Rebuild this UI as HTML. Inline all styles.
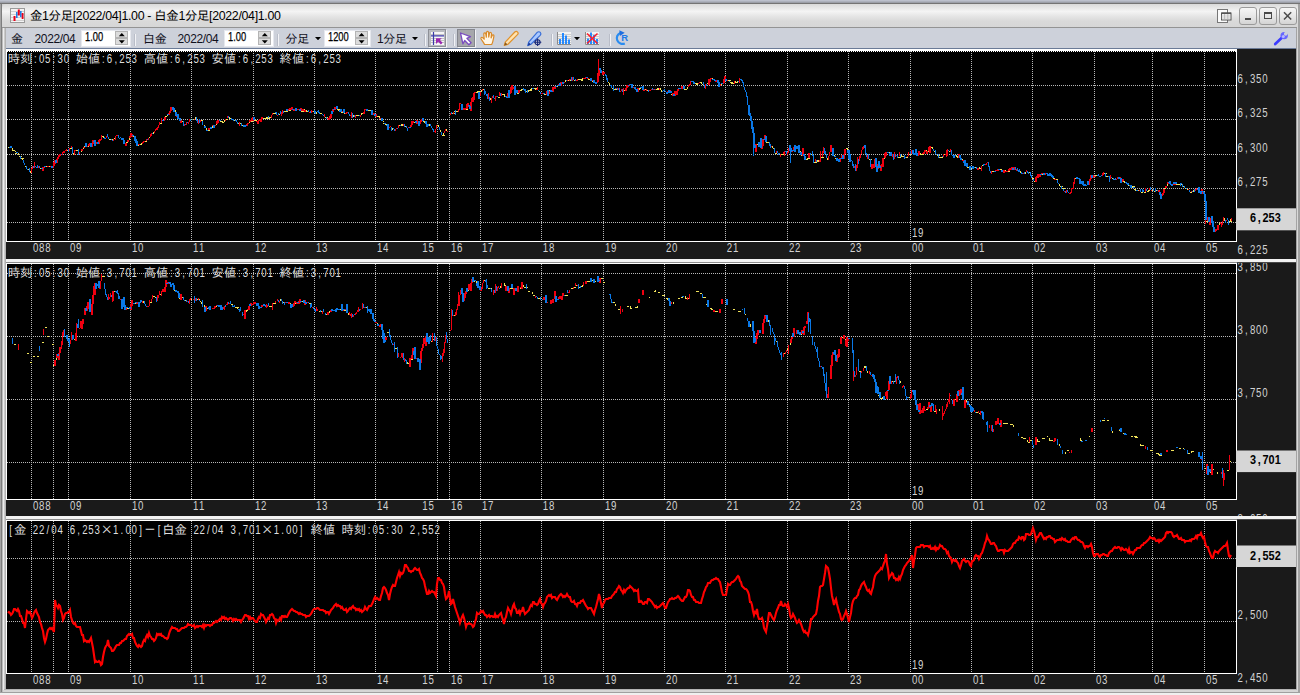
<!DOCTYPE html>
<html lang="ja"><head><meta charset="utf-8"><title>金1分足[2022/04]1.00 - 白金1分足[2022/04]1.00</title>
<style>
html,body{margin:0;padding:0}
body{width:1300px;height:695px;position:relative;overflow:hidden;background:#bcc0cc;font-family:"Liberation Sans","IPAGothic",sans-serif;font-size:12.4px;color:#000}
.abs{position:absolute}
#win{left:0;top:3px;width:1300px;height:690px;background:#d2d2d2}
#below{left:0;top:693px;width:1300px;height:2px;background:#f0f0f0}
#tbar{left:2px;top:1px;width:1296px;height:23px;background:linear-gradient(#d9d9d9 0,#f4f4f4 32%,#e4e4e4 55%,#d9d9d9 75%,#d6d6d6 100%);border-top-left-radius:4px;border-top-right-radius:4px}
#title{left:30px;top:9px;height:14px;line-height:14px;white-space:nowrap;letter-spacing:-0.33px;font-size:12.4px}
#tool{left:6px;top:28px;width:1290px;height:20px;background:#cdd1da}
.lbl{top:33px;height:13px;line-height:13px;white-space:nowrap;font-size:12px;letter-spacing:-0.35px;color:#10101c}
.spin{top:29.6px;height:17.6px;background:#fff;box-sizing:border-box;border:1px solid #e6e8ee}
.spin span{position:absolute;left:2.6px;top:0.2px;line-height:13px;font-size:12.6px;letter-spacing:0;transform:scaleX(.74);transform-origin:0 0;-webkit-text-stroke:0.25px #000}
.sb{position:absolute;right:1.6px;width:13px;height:7px;background:#dcdcdc;box-sizing:border-box;border:1px solid #b4b4b4}
.sep{top:34px;width:1px;height:12px;background:#f2f3f6;border-left:1px solid #b9bdc8}
.wb{top:7px;width:18px;height:18px;box-sizing:border-box;border:1px solid #9a9a9a;border-radius:3px;background:linear-gradient(#f6f6f6,#e9e9e9 45%,#d4d4d4)}
text.la{font-family:"Liberation Sans",sans-serif;font-size:12.4px}
text.lb{font-family:"Liberation Sans",sans-serif;font-size:12.4px;font-weight:bold}
text.cj{font-family:"Liberation Mono","IPAGothic",monospace;font-size:12.36px}
text.cs{font-family:"IPAGothic","Liberation Mono",monospace;font-size:12.36px}
</style></head><body>
<div id="win" class="abs"></div>
<div id="below" class="abs"></div>
<!-- frame edges -->
<div class="abs" style="left:0;top:1px;width:1300px;height:1px;background:#adb1bc"></div><div class="abs" style="left:0;top:2px;width:1300px;height:1px;background:#9c9fa8"></div><div class="abs" style="left:0;top:3px;width:1300px;height:1px;background:#747474"></div>
<div class="abs" style="left:0;top:4px;width:1px;height:689px;background:#a4a4a4"></div><div class="abs" style="left:1px;top:4px;width:1px;height:689px;background:#7e7e7e"></div>
<div class="abs" style="left:2px;top:27px;width:1px;height:666px;background:#bcbcbc"></div>
<div class="abs" style="left:3px;top:27px;width:1px;height:664px;background:#ececec"></div>
<div class="abs" style="left:4px;top:27px;width:1px;height:663px;background:#cacaca"></div><div class="abs" style="left:5px;top:27px;width:1px;height:663px;background:#b2b2b2"></div>
<div class="abs" style="left:1296px;top:27px;width:1px;height:663px;background:#a4a4a4"></div>
<div class="abs" style="left:1297px;top:5px;width:1px;height:687px;background:#d8d8d8"></div>
<div class="abs" style="left:1298px;top:4px;width:2px;height:689px;background:#a2a2a2"></div>
<div class="abs" style="left:4px;top:689px;width:1293px;height:1px;background:#b4b4b4"></div>
<div class="abs" style="left:3px;top:690px;width:1295px;height:2px;background:#d6d6d6"></div>
<div class="abs" style="left:0;top:692px;width:1300px;height:1px;background:#a0a0a0"></div>
<!-- title bar -->
<div id="tbar" class="abs" style="top:4px"></div>
<div class="abs" style="left:2px;top:27px;width:1295px;height:1px;background:#939393"></div>
<svg class="abs" style="left:10px;top:8px" width="15" height="16" viewBox="0 0 15 16">
<rect x="0.5" y="0.5" width="14" height="14" fill="#f4f4f4" stroke="#9a9a9a" stroke-width="1"/>
<path d="M1 3.5H14M1 6.5H14M1 9.5H14M1 12.5H14" stroke="#cfcfcf" stroke-width="1"/>
<path d="M4.5 8V13" stroke="#e8001a" stroke-width="2"/><path d="M6.8 4V10" stroke="#1e7fe8" stroke-width="1.6"/>
<path d="M8.8 1.5V7.5" stroke="#e8001a" stroke-width="2"/><path d="M10.8 3V9" stroke="#1e7fe8" stroke-width="1.6"/>
<path d="M12.6 5V11" stroke="#e8001a" stroke-width="1.8"/>
</svg>
<div id="title" class="abs">金1分足[2022/04]1.00 - 白金1分足[2022/04]1.00</div>
<!-- window list icon -->
<svg class="abs" style="left:1216px;top:8px" width="16" height="16" viewBox="0 0 16 16">
<rect x="1.5" y="1.5" width="10" height="13" fill="#fbfbfb" stroke="#777" stroke-width="1"/>
<rect x="5.5" y="5" width="9.5" height="7" fill="#fff" stroke="#555" stroke-width="1"/>
<rect x="5.5" y="4.5" width="9.5" height="1.6" fill="#555"/>
<path d="M8.6 6V12M11.8 6V12M5.5 8H15M5.5 10H15" stroke="#aaa" stroke-width="0.7"/>
</svg>
<div class="abs wb" style="left:1239px"><div class="abs" style="left:5px;top:10px;width:6px;height:2px;background:#4a4a4a"></div></div>
<div class="abs wb" style="left:1259px"><div class="abs" style="left:4px;top:4px;width:8px;height:7px;box-sizing:border-box;border:1px solid #4a4a4a;border-top-width:2px"></div></div>
<div class="abs wb" style="left:1279px"><svg class="abs" style="left:0;top:0" width="15" height="15"><path d="M4 4.2L11.2 11.6M11.2 4.2L4 11.6" stroke="#4a4a4a" stroke-width="1.5"/></svg></div>
<!-- toolbar -->
<div id="tool" class="abs"></div>
<div class="abs" style="left:6px;top:48px;width:1290px;height:1px;background:#6b7b97"></div>
<div class="abs lbl" style="left:11px">金</div>
<div class="abs lbl" style="left:34.5px">2022/04</div>
<div class="abs spin" style="left:81px;width:50px"><span>1.00</span><div class="sb" style="top:0.4px"></div><div class="sb" style="top:7.6px"></div></div>
<div class="abs sep" style="left:134px"></div>
<div class="abs lbl" style="left:143px">白金</div>
<div class="abs lbl" style="left:177.5px">2022/04</div>
<div class="abs spin" style="left:224px;width:50px"><span>1.00</span><div class="sb" style="top:0.4px"></div><div class="sb" style="top:7.6px"></div></div>
<div class="abs sep" style="left:277px"></div>
<div class="abs lbl" style="left:285.5px">分足</div>
<div class="abs lbl" style="left:377px">1分足</div>
<div class="abs spin" style="left:324px;width:47px"><span>1200</span><div class="sb" style="top:0.4px"></div><div class="sb" style="top:7.6px"></div></div>
<div class="abs sep" style="left:424px"></div>
<div class="abs sep" style="left:453px"></div>
<div class="abs sep" style="left:551px"></div>
<div class="abs sep" style="left:609px"></div>
<!-- toolbar icons -->
<svg class="abs" style="left:0;top:28px" width="1300" height="21" viewBox="0 28 1300 21">
<!-- spinner arrows & dropdown arrows -->
<g fill="#000">
<path d="M118.800 36.2l3-3.300 3 3.300zM118.800 40.200l3 3.300 3-3.300z"/>
<path d="M261.800 36.2l3-3.300 3 3.300zM261.800 40.200l3 3.300 3-3.300z"/>
<path d="M358.600 36.2l3-3.300 3 3.300zM358.600 40.200l3 3.300 3-3.300z"/>
<path d="M315 37h6l-3 3.2zM412 37h6l-3 3.2zM574 37h6l-3 3.2z"/>
</g>
<!-- icon1 pressed: chart cursor -->
<rect x="428.5" y="29.5" width="17" height="17" fill="#b9bbc0" stroke="#8d8f96"/>
<path d="M429 47.5H446.5V30" stroke="#f4f4f6" fill="none"/>
<rect x="431" y="32" width="13" height="13" fill="#f6f6f6"/>
<path d="M431 34.5H444M431 38.5H444M431 40.5H444M431 42.5H444" stroke="#c4c4c4" stroke-width="1"/>
<path d="M433.5 32V45M431 35.8H444" stroke="#3a3aa8" stroke-width="1.2"/>
<path d="M436 38.2h5.800l-1.900 1.900 2.700 2.700-1.700 1.700-2.700-2.700-2.200 2.100z" fill="#9a28b0"/>
<!-- icon2 pressed: arrow cursor -->
<rect x="457.5" y="29.5" width="17" height="17" fill="#a6a7ab" stroke="#85878e"/>
<path d="M458 47.5H475.5V30" stroke="#f4f4f6" fill="none"/>
<path d="M460.5 33l10 3.6-3.6 1.8 4.2 4.3-2.2 2.1-4.2-4.3-1.8 3.4z" fill="#fff" stroke="#7a4cc0" stroke-width="1.3" stroke-linejoin="round"/>
<!-- hand -->
<path d="M484.5 44.5c-.6-2-2.4-3.800-3.400-5.500-.7-1.300.8-2.200 1.800-1.200l1.300 1.400-.4-5.200c-.1-1.400 1.800-1.600 2-.2l.5 3.300.2-4.600c.1-1.400 2-1.400 2.100 0l.1 4.600.8-3.800c.3-1.300 2.100-1 2 .4l-.4 4.200 1-2.400c.5-1.200 2.100-.6 1.800.7-.5 2.500-.8 5.800-2.200 8.300z" fill="#fff6e6" stroke="#d98a28" stroke-width="1.2" stroke-linejoin="round"/>
<!-- pencil -->
<path d="M505.2 42.200l9.600-10.200c.8-.8 2.100-.8 2.800.1.700.8.600 1.900-.1 2.600l-9.800 9.800-3.400 1z" fill="#ffe3b0" stroke="#e0922c" stroke-width="1.2" stroke-linejoin="round"/>
<path d="M504.200 45.600l1.100-3.300 2.300 2.300z" fill="#8a5a20"/>
<!-- blue pen with crosshair -->
<path d="M528.700 42.200l8.500-9.800c.9-.9 2.300-.9 3.100 0 .8.900.7 2.100-.1 2.900l-9.300 9-3.200 1.300z" fill="#a9c8ff" stroke="#3a6fd8" stroke-width="1.2" stroke-linejoin="round"/>
<path d="M527.600 45.700l1.200-3.400 2.200 2.200z" fill="#1c3c9a"/>
<circle cx="537.600" cy="42.300" r="2.500" fill="none" stroke="#1a2a7a" stroke-width="1.1"/>
<path d="M537.600 38.600V46M533.900 42.300H541.300" stroke="#1a2a7a" stroke-width="1.1"/>
<!-- bar chart -->
<rect x="557" y="32" width="14" height="13" fill="#f3f3f3"/>
<path d="M557 34.500H571M557 36.500H571M557 38.500H571M557 40.500H571M557 42.500H571" stroke="#cdcdcd"/>
<path d="M557.500 32V44.500H571" stroke="#8a8a8a" fill="none"/>
<path d="M560 39V44M563 33V44M566 35.500V44M569 39.500V44" stroke="#1e86ff" stroke-width="1.9"/>
<!-- x chart -->
<rect x="585" y="32" width="14" height="13" fill="#f3f3f3"/>
<path d="M585 34.500H599M585 36.500H599M585 38.500H599M585 40.500H599M585 42.500H599" stroke="#cdcdcd"/>
<path d="M585.500 32V44.500H599" stroke="#8a8a8a" fill="none"/>
<path d="M588 38.500V44M591 32.500V44M594 35V44M597 39V44" stroke="#1e86ff" stroke-width="1.9"/>
<path d="M587 33.500L597.500 43.500M597.500 33.500L587 43.500" stroke="#ff1a2a" stroke-width="1.5"/>
<!-- refresh R -->
<path d="M624.800 43.400A5.600 5.600 0 1 1 620.300 32.900" fill="none" stroke="#2a8cf0" stroke-width="2.200"/>
<path d="M619.300 30.200l5.400 2.500-4.800 3.300z" fill="#1e6fe0"/>
<text x="621.200" y="41.400" font-family="Liberation Sans,sans-serif" font-weight="bold" font-size="9.500" fill="#1e7ae8">R</text>
<!-- wrench -->
<path d="M1275.200 44l6.600-6.200" stroke="#3c3cff" stroke-width="2.700" stroke-linecap="round"/>
<circle cx="1284.200" cy="35.600" r="3.700" fill="#6666ff"/>
<circle cx="1283.300" cy="36.500" r="1.500" fill="#b8b8ff"/>
<circle cx="1285.700" cy="33.900" r="1.800" fill="#cdd1da"/>
<path d="M1285.700 33.900l3-3.200" stroke="#cdd1da" stroke-width="2.600"/>
</svg>
<svg width="1300" height="695" viewBox="0 0 1300 695" style="position:absolute;left:0;top:0">
<defs>
<clipPath id="k1"><rect x="6" y="49" width="1290" height="210"/></clipPath>
<clipPath id="k2"><rect x="6" y="263" width="1290" height="253"/></clipPath>
<clipPath id="k3"><rect x="6" y="520" width="1290" height="169"/></clipPath>
</defs>
<rect x="6" y="49" width="1290" height="640" fill="#1a1a1a"/>
<g shape-rendering="crispEdges">
<rect x="7" y="51" width="1229" height="190" fill="#000"/>
<rect x="7" y="264" width="1229" height="235" fill="#000"/>
<rect x="7" y="521" width="1229" height="152" fill="#000"/>
<rect x="6" y="259" width="1290" height="3" fill="#f2f2f2"/><rect x="6" y="262" width="1231" height="1" fill="#8c8c8c"/><rect x="1237" y="262" width="59" height="1" fill="#484848"/>
<rect x="6" y="516" width="1290" height="3" fill="#f2f2f2"/><rect x="6" y="519" width="1231" height="1" fill="#8c8c8c"/><rect x="1237" y="519" width="59" height="1" fill="#484848"/>
</g>
<text class="cj" x="7.7 20.1" y="63.0" fill="#dedede">時刻</text><text class="la" transform="translate(0 63.0) scale(0.78 1)" x="43.7 49.9 57.8 67.4 73.6 81.6 91.2" y="0" fill="#dedede">:05:30 </text><text class="cj" x="75.7 88.0" y="63.0" fill="#dedede">始値</text><text class="la" transform="translate(0 63.0) scale(0.78 1)" x="130.8 137.0 146.7 152.9 160.8 168.7 178.4" y="0" fill="#dedede">:6,253 </text><text class="cj" x="143.7 156.0" y="63.0" fill="#dedede">高値</text><text class="la" transform="translate(0 63.0) scale(0.78 1)" x="218.0 224.2 233.8 240.0 248.0 255.9 265.5" y="0" fill="#dedede">:6,253 </text><text class="cj" x="211.6 224.0" y="63.0" fill="#dedede">安値</text><text class="la" transform="translate(0 63.0) scale(0.78 1)" x="305.1 311.3 321.0 327.2 335.1 343.0 352.7" y="0" fill="#dedede">:6,253 </text><text class="cj" x="279.6 292.0" y="63.0" fill="#dedede">終値</text><text class="la" transform="translate(0 63.0) scale(0.78 1)" x="392.3 398.5 408.1 414.3 422.3 430.2" y="0" fill="#dedede">:6,253</text>
<text class="cj" x="7.7 20.1" y="276.6" fill="#dedede">時刻</text><text class="la" transform="translate(0 276.6) scale(0.78 1)" x="43.7 49.9 57.8 67.4 73.6 81.6 91.2" y="0" fill="#dedede">:05:30 </text><text class="cj" x="75.7 88.0" y="276.6" fill="#dedede">始値</text><text class="la" transform="translate(0 276.6) scale(0.78 1)" x="130.8 137.0 146.7 152.9 160.8 168.7 178.4" y="0" fill="#dedede">:3,701 </text><text class="cj" x="143.7 156.0" y="276.6" fill="#dedede">高値</text><text class="la" transform="translate(0 276.6) scale(0.78 1)" x="218.0 224.2 233.8 240.0 248.0 255.9 265.5" y="0" fill="#dedede">:3,701 </text><text class="cj" x="211.6 224.0" y="276.6" fill="#dedede">安値</text><text class="la" transform="translate(0 276.6) scale(0.78 1)" x="305.1 311.3 321.0 327.2 335.1 343.0 352.7" y="0" fill="#dedede">:3,701 </text><text class="cj" x="279.6 292.0" y="276.6" fill="#dedede">終値</text><text class="la" transform="translate(0 276.6) scale(0.78 1)" x="392.3 398.5 408.1 414.3 422.3 430.2" y="0" fill="#dedede">:3,701</text>
<text class="la" transform="translate(0 533.6) scale(0.78 1)" x="12.0" y="0" fill="#dedede">[</text><text class="cj" x="13.9" y="533.6" fill="#dedede">金</text><text class="la" transform="translate(0 533.6) scale(0.78 1)" x="35.8 42.0 49.9 59.5 65.7 73.6 83.3 89.5 99.1 105.3 113.3 121.2" y="0" fill="#dedede"> 22/04 6,253</text><text class="cs" x="100.4" y="533.6" fill="#dedede">×</text><text class="la" transform="translate(0 533.6) scale(0.78 1)" x="145.0 154.6 160.8 168.7 178.4" y="0" fill="#dedede">1.00]</text><text class="cs" x="143.7" y="533.6" fill="#dedede">－</text><text class="la" transform="translate(0 533.6) scale(0.78 1)" x="202.1" y="0" fill="#dedede">[</text><text class="cj" x="162.2 174.6" y="533.6" fill="#dedede">白金</text><text class="la" transform="translate(0 533.6) scale(0.78 1)" x="241.8 248.0 255.9 265.5 271.7 279.6 289.3 295.5 305.1 311.3 319.3 327.2" y="0" fill="#dedede"> 22/04 3,701</text><text class="cs" x="261.1" y="533.6" fill="#dedede">×</text><text class="la" transform="translate(0 533.6) scale(0.78 1)" x="351.0 360.6 366.8 374.7 384.4 392.3" y="0" fill="#dedede">1.00] </text><text class="cj" x="310.5 322.9" y="533.6" fill="#dedede">終値</text><text class="cj" x="341.4 353.8" y="533.6" fill="#dedede">時刻</text><text class="la" transform="translate(0 533.6) scale(0.78 1)" x="471.5 477.7 485.6 495.3 501.5 509.4 519.1 525.3 534.9 541.1 549.0 557.0" y="0" fill="#dedede">:05:30 2,552</text>
<g shape-rendering="crispEdges">
<path d="M31.5 51V241M53.5 51V241M68.5 51V241M130.5 51V241M191.5 51V241M253.5 51V241M314.5 51V241M375.5 51V241M437.5 51V241M449.5 51V241M480.5 51V241M541.5 51V241M603.5 51V241M664.5 51V241M725.5 51V241M787.5 51V241M848.5 51V241M910.5 51V241M971.5 51V241M1032.5 51V241M1094.5 51V241M1152.5 51V241M1204.5 51V241M7 85.5H1236M7 119.5H1236M7 154.5H1236M7 188.5H1236M7 222.5H1236M31.5 264V499M53.5 264V499M68.5 264V499M130.5 264V499M191.5 264V499M253.5 264V499M314.5 264V499M375.5 264V499M437.5 264V499M449.5 264V499M480.5 264V499M541.5 264V499M603.5 264V499M664.5 264V499M725.5 264V499M787.5 264V499M848.5 264V499M910.5 264V499M971.5 264V499M1032.5 264V499M1094.5 264V499M1152.5 264V499M1204.5 264V499M7 273.5H1236M7 336.5H1236M7 399.5H1236M7 462.5H1236M31.5 521V673M53.5 521V673M68.5 521V673M130.5 521V673M191.5 521V673M253.5 521V673M314.5 521V673M375.5 521V673M437.5 521V673M449.5 521V673M480.5 521V673M541.5 521V673M603.5 521V673M664.5 521V673M725.5 521V673M787.5 521V673M848.5 521V673M910.5 521V673M971.5 521V673M1032.5 521V673M1094.5 521V673M1152.5 521V673M1204.5 521V673M7 558.5H1236M7 621.5H1236" stroke="#b8b8b8" stroke-width="1" stroke-dasharray="1 1" fill="none"/>
<path d="M7 51.5H1236" stroke="#fff" stroke-width="1" stroke-dasharray="1 1" fill="none"/>
<rect x="6" y="49" width="1231" height="2" fill="#fff"/><rect x="6" y="263" width="1231" height="1" fill="#fff"/><rect x="6" y="520" width="1231" height="1" fill="#fff"/><rect x="6" y="49" width="1" height="193" fill="#fff"/><rect x="1236" y="49" width="1" height="193" fill="#fff"/><rect x="6" y="241" width="1231" height="1" fill="#fff"/><rect x="6" y="263" width="1" height="237" fill="#fff"/><rect x="1236" y="263" width="1" height="237" fill="#fff"/><rect x="6" y="499" width="1231" height="1" fill="#fff"/><rect x="6" y="520" width="1" height="154" fill="#fff"/><rect x="1236" y="520" width="1" height="154" fill="#fff"/><rect x="6" y="673" width="1231" height="1" fill="#fff"/>
</g>
<rect x="1236" y="208.3" width="60" height="22.0" fill="#d6d6d6"/><rect x="1236" y="450.5" width="60" height="21.6" fill="#d6d6d6"/><rect x="1236" y="545.5" width="60" height="21.5" fill="#d6d6d6"/>
<g clip-path="url(#k1)"><g fill="none" stroke-width="1.1" shape-rendering="crispEdges"><path stroke="#f0e25a" stroke-width="1" d="M8.0 147.5h3M12.0 148.4V150.0M12.0 150.5h2M13.0 150.5h2M15.0 150.8V152.2M15.0 153.5h2M18.0 153.3V155.2M18.5 156.5h3M20.5 158.5h3M22.5 158.7V160.3M24.5 166.5h2M27.5 169.5h2M30.5 171.1V172.7M40.0 168.5h2M45.0 166.5h3M46.0 166.5h2M48.0 166.5h2M49.0 166.5h2M66.5 150.5h2M69.5 148.5h3M73.5 153.0V154.5M75.5 150.5h2M76.5 150.5h2M81.0 150.7V152.4M83.0 147.7V149.3M84.0 146.5h2M87.0 146.5h2M101.5 136.5h2M102.5 137.5h2M108.5 139.5h2M109.5 139.5h3M114.5 137.8V139.0M125.0 143.7V145.1M126.0 142.5h2M129.0 137.9V140.0M133.0 136.5h2M137.0 145.5h2M139.0 144.5h2M141.0 143.1V144.5M144.5 141.5h2M149.5 136.9V138.1M153.5 132.1V133.5M159.5 123.5h2M165.0 116.5h2M167.0 114.0V116.1M172.0 106.7V108.5M175.0 110.3V112.4M181.0 121.5h3M190.5 119.5h2M192.5 119.5h2M195.5 117.3V118.5M200.5 120.5h2M204.0 124.5V126.3M206.0 127.9V129.9M207.0 130.5h3M210.0 126.5V128.0M212.0 125.4V127.5M216.0 123.5V125.2M218.0 120.5h2M220.0 121.5h2M221.0 121.5h2M222.0 122.5h2M224.5 120.4V121.8M225.5 119.5h2M229.5 117.0V119.1M230.5 117.8V119.1M233.5 120.5h2M237.5 123.5h2M239.5 123.5h2M241.5 125.5h2M249.0 122.0V123.2M250.0 121.5h3M254.0 120.5h3M256.0 120.0V121.5M262.0 118.5h2M263.0 118.5h2M264.5 118.5h2M265.5 117.5h2M266.5 118.5h3M268.5 117.5h2M269.5 117.5h2M272.5 113.5h2M273.5 113.5h2M279.5 113.5V114.9M283.5 111.5h3M285.0 111.5h3M288.0 110.5h3M291.0 108.1V109.9M294.0 110.5h2M297.0 109.5h3M301.0 111.5h3M304.0 109.1V110.6M306.0 110.3V112.0M307.5 110.8V112.0M312.5 111.5h2M316.5 111.5V113.7M319.5 113.5h2M321.5 112.6V114.2M324.5 117.5h3M337.0 109.5h3M338.0 110.5h2M341.0 112.5h2M344.0 113.5h2M353.5 115.1V117.2M355.5 115.5h3M356.5 115.5h2M357.5 115.5h2M361.5 113.2V114.7M361.5 113.5h2M368.0 110.5h2M369.0 110.5h2M370.0 110.5h2M372.0 113.5h3M376.0 116.5h3M377.0 116.5h3M379.0 116.3V117.6M380.0 119.5h2M383.0 120.7V122.2M383.0 123.5h2M385.0 124.5h2M392.5 128.2V129.5M398.5 125.5h2M401.5 124.4V126.0M402.5 124.4V125.7M404.5 126.5h2M413.0 122.5h2M414.0 122.5h2M417.0 122.5h2M423.0 121.5h2M424.0 122.5h3M429.0 124.3V126.2M436.5 125.5h2M438.5 125.0V126.6M440.5 129.9V132.0M441.5 135.5h3M443.5 132.9V134.6M446.5 128.9V130.9M451.5 113.5h3M454.5 110.5V112.4M455.5 111.5h3M456.5 111.5h2M464.0 107.6V109.1M465.0 109.5h3M475.0 92.5h2M476.0 92.5h2M477.0 91.5h3M481.0 90.3V92.1M482.5 89.5h2M490.5 98.1V99.8M497.5 97.5h2M502.0 94.5h2M504.0 94.1V96.3M504.0 96.5h2M517.0 93.5h2M519.0 90.5h3M520.0 90.5h2M521.0 89.5h2M525.5 91.5h2M528.5 90.4V92.2M528.5 90.5h3M529.5 89.5h2M530.5 88.5h3M533.5 88.5h3M534.5 89.5h2M539.5 90.7V92.3M544.0 94.5h2M545.0 94.5h3M549.0 90.5h3M553.0 88.5h3M557.0 85.5V87.0M562.0 82.3V84.3M565.5 79.9V81.9M567.5 80.5h3M573.5 80.5h2M578.5 78.8V80.2M578.5 79.5h3M580.5 79.0V80.4M580.5 80.5h2M582.5 78.4V79.9M588.0 79.5h2M589.0 79.5h2M592.0 81.5h2M608.5 81.5V83.2M609.5 83.2V85.1M612.5 87.7V89.4M613.5 89.5h3M623.5 90.5h2M638.0 89.5h2M639.0 88.5h2M644.0 89.5h2M646.5 90.5h2M655.5 89.5h2M656.5 88.5h2M658.5 88.3V90.2M660.5 87.8V89.6M661.5 89.6V91.5M671.0 94.5h2M675.0 93.5h2M682.0 86.5h2M684.0 89.5h2M685.0 89.5h2M687.5 87.2V89.4M694.5 83.5h3M696.5 83.2V84.9M697.5 83.5V84.9M699.5 82.5h2M701.5 81.9V83.5M701.5 84.5h2M707.0 83.5h2M711.0 78.5h2M716.0 81.5h2M721.0 82.5V84.6M727.5 80.5h3M729.5 82.5h3M730.5 83.5h2M731.5 83.5h2M732.5 83.5h2M735.5 81.3V82.7M735.5 82.5h2M736.5 81.5h3M756.0 144.5h3M758.0 141.9V143.2M766.0 142.5h3M767.0 142.5h3M772.5 146.0V148.1M772.5 148.5h2M774.5 153.5h2M780.5 154.5h3M781.5 154.5h3M796.0 146.8V148.8M799.0 151.5h2M801.0 155.5h3M806.0 159.1V160.3M806.0 159.5h2M807.0 158.5h3M810.5 154.5h2M813.5 162.5h3M817.5 160.4V161.7M818.5 160.4V162.1M820.5 157.5h3M827.5 157.8V159.5M831.0 148.5h2M833.0 155.5h2M835.0 158.5h3M846.0 148.0V149.4M847.0 148.0V149.9M868.5 159.5h3M872.0 166.5h3M884.0 157.8V159.1M888.0 152.5h3M897.5 157.5h3M901.5 154.5V156.6M901.5 156.5h2M902.5 156.5h2M905.5 157.5h2M908.5 154.5h2M915.0 153.0V155.1M919.0 153.5h2M920.0 154.5h3M921.0 154.5h3M926.0 149.7V151.6M927.0 151.5h2M930.0 147.5h3M932.0 147.4V148.7M933.5 151.5h2M936.5 155.5h3M939.5 156.5V158.4M939.5 157.5h2M940.5 157.5h2M943.5 154.5h3M948.5 151.5h2M955.0 155.5h2M956.0 156.5h3M957.0 157.5h2M962.0 159.3V161.2M967.0 167.5h2M968.0 167.5h3M971.0 166.8V168.6M974.5 167.5h2M979.5 167.3V168.6M979.5 168.5h2M982.5 164.9V166.1M991.5 171.5h3M992.5 171.5h2M996.0 170.5h2M999.0 169.5h3M1000.0 169.5h2M1002.0 171.5h3M1004.0 170.5h2M1007.0 171.5h3M1011.0 169.1V170.4M1020.5 170.6V172.5M1025.5 171.8V173.8M1028.5 172.5h2M1031.5 178.5h2M1033.5 181.5h2M1042.0 174.5h2M1049.0 173.0V174.6M1053.0 178.5h2M1055.5 179.5h2M1059.5 183.9V186.0M1059.5 186.5h3M1061.5 188.5h3M1074.5 178.5h2M1078.0 178.0V179.4M1080.0 181.5h2M1087.0 183.0V184.5M1093.0 176.5h2M1095.0 175.5h3M1103.5 173.5h3M1105.5 176.5h2M1106.5 176.5h2M1111.5 178.5h2M1123.0 181.5h2M1124.0 182.5h3M1128.0 185.5h3M1132.0 185.7V187.6M1132.0 186.5h3M1134.0 189.5h2M1135.0 190.5h3M1137.5 190.5h3M1140.5 192.5h2M1143.5 192.5h2M1146.5 191.5h2M1147.5 190.5h2M1151.5 190.5h2M1153.5 191.5h2M1155.5 190.5h3M1164.0 188.5h2M1167.0 184.4V185.7M1176.0 184.5h2M1177.5 184.5h2M1178.5 184.5h3M1182.5 186.5h2M1184.5 188.5h2M1186.5 189.5h2M1189.5 192.5h2M1193.5 190.0V191.9M1199.0 191.5h2M1206.0 221.5h2M1211.0 215.5V217.7M1217.0 228.4V229.7M1219.5 223.2V225.3M1224.5 218.4V220.5M1228.5 221.5h3M1230.5 219.1V221.0"/><path stroke="#f00010" d="M31.5 168.0V172.7M32.5 166.3V169.3M34.5 161.5V168.1M38.5 166.0V168.2M43.0 167.4V170.5M44.0 166.8V168.0M48.0 166.1V167.3M51.0 166.1V167.3M53.0 166.3V167.5M54.0 161.6V166.3M55.0 159.6V163.8M57.0 158.9V162.9M58.0 156.9V158.9M59.0 154.5V156.9M60.0 153.8V156.3M62.5 151.6V154.7M63.5 151.1V152.5M64.5 151.3V152.5M65.5 150.0V151.3M66.5 148.9V150.8M69.5 147.9V151.3M71.5 146.1V147.6M74.5 149.9V154.5M75.5 150.0V151.4M79.5 151.8V153.9M82.0 149.3V150.7M84.0 146.7V147.9M87.0 145.5V147.3M89.0 144.2V146.0M90.0 142.9V144.4M92.0 142.6V146.7M93.0 140.1V143.5M96.0 142.6V143.8M97.0 142.2V143.4M99.0 139.6V144.1M100.0 139.1V141.1M101.5 135.4V139.7M106.5 136.0V138.1M113.5 138.5V141.1M115.5 135.9V140.3M116.5 135.0V136.4M117.5 135.0V136.3M126.0 142.5V145.7M128.0 140.0V142.0M130.0 136.2V137.9M131.0 132.5V137.1M132.0 133.8V136.8M139.0 144.1V145.3M142.5 141.9V144.1M143.5 140.9V142.6M144.5 140.9V142.3M146.5 139.1V140.5M148.5 138.1V140.0M150.5 133.5V136.9M151.5 132.8V136.0M154.5 131.0V133.0M155.5 129.4V131.0M156.5 127.5V129.6M157.5 127.3V129.6M158.5 125.3V127.8M159.5 121.9V125.3M161.5 118.1V123.1M164.0 119.5V120.7M165.0 116.6V119.5M169.0 113.0V114.9M170.0 111.1V113.0M171.0 106.6V111.1M177.0 115.9V117.1M181.0 120.3V123.4M184.5 123.6V126.0M186.5 122.1V125.1M188.5 121.9V124.1M189.5 118.8V122.4M194.5 118.5V119.7M198.5 119.6V123.6M200.5 120.0V122.4M209.0 127.6V129.7M213.0 124.7V125.9M215.0 124.5V126.3M217.0 121.3V124.1M218.0 119.7V122.5M225.5 119.4V120.6M227.5 116.4V118.2M239.5 122.2V125.9M247.0 124.2V126.0M248.0 122.5V124.4M250.0 120.2V122.0M252.0 117.8V121.1M253.0 116.9V120.6M257.0 120.6V122.1M258.0 120.6V123.7M259.0 119.9V121.3M260.0 119.3V120.5M261.0 119.2V121.5M262.0 117.0V119.2M271.5 114.6V118.2M272.5 112.7V114.6M277.5 114.7V116.1M281.5 112.1V115.7M282.5 109.6V113.9M288.0 108.9V110.7M290.0 107.7V110.3M292.0 107.2V109.9M294.0 109.3V110.5M297.0 108.8V110.0M299.0 109.0V110.2M301.0 108.3V111.1M303.0 108.8V110.6M305.0 110.3V111.5M309.5 111.6V112.8M311.5 109.6V112.5M312.5 110.9V112.1M324.5 113.9V116.9M328.0 117.7V119.4M329.0 117.9V119.8M330.0 116.0V119.3M331.0 113.7V117.9M333.0 109.0V112.3M335.0 107.3V109.7M336.0 106.6V108.3M343.0 110.9V112.1M346.0 112.6V113.8M347.0 111.9V113.1M350.5 115.2V116.4M351.5 112.1V118.1M355.5 115.1V117.7M360.5 114.7V116.7M363.5 112.2V113.7M364.5 109.3V113.5M365.5 108.5V110.0M374.0 113.3V114.5M376.0 114.4V116.7M380.0 117.6V118.8M389.5 126.5V127.7M390.5 126.0V127.2M395.5 128.8V130.9M396.5 128.0V129.2M398.5 124.8V128.4M403.5 123.8V125.7M408.5 127.0V128.2M411.0 125.2V126.6M412.0 120.6V125.2M413.0 121.2V123.4M417.0 119.8V123.5M420.0 121.0V123.9M421.0 120.4V121.6M422.0 118.9V120.4M434.5 130.5V131.7M435.5 128.9V133.1M436.5 125.3V128.9M444.5 131.3V133.4M445.5 128.9V131.3M447.5 130.9V132.1M450.5 113.0V114.6M453.5 112.4V113.6M458.5 108.8V111.9M459.5 102.9V109.8M460.5 103.2V104.4M463.0 107.6V109.6M465.0 107.7V110.1M467.0 103.5V109.2M468.0 102.5V106.5M471.0 102.0V110.8M472.0 97.8V102.0M473.0 96.9V101.6M474.0 93.0V100.4M475.0 91.8V93.0M480.0 92.1V95.9M482.5 89.0V91.3M488.5 92.9V98.8M491.5 97.9V102.7M492.5 95.5V98.1M495.5 95.8V100.9M496.5 95.5V97.0M499.5 92.3V96.2M501.5 93.0V95.7M508.0 92.9V98.3M510.0 91.2V93.5M511.0 86.6V93.4M512.0 85.3V90.0M513.0 86.5V89.1M514.0 87.1V89.1M516.0 90.7V93.4M519.0 89.7V92.7M536.5 89.1V90.3M537.5 87.2V90.2M541.5 93.1V94.3M542.5 93.0V94.2M547.0 91.0V95.2M549.0 90.5V93.8M553.0 86.9V92.1M555.0 85.6V89.3M559.0 83.9V85.1M561.0 82.4V86.2M564.5 81.5V82.8M567.5 79.9V81.1M569.5 78.6V80.9M570.5 78.6V80.1M572.5 76.9V80.6M576.5 80.2V81.4M577.5 79.4V80.6M583.5 78.2V79.4M585.0 77.7V79.0M586.0 77.1V78.3M588.0 78.2V79.4M592.0 80.0V81.2M597.0 81.6V82.8M598.0 72.6V81.6M599.0 68.2V75.7M602.0 71.3V72.5M603.0 72.0V74.6M604.0 71.9V74.2M616.5 87.5V89.1M618.5 88.4V89.9M620.5 90.7V91.9M621.5 89.2V90.7M623.5 87.9V94.6M626.0 88.1V90.7M627.0 85.3V88.2M628.0 85.5V87.0M630.0 83.6V85.4M633.0 86.6V88.2M634.0 86.8V88.0M638.0 87.5V91.9M642.0 86.8V88.0M644.0 88.6V91.2M646.5 89.3V90.5M649.5 90.0V91.2M650.5 89.5V91.2M651.5 88.9V90.1M653.5 89.0V90.2M655.5 88.8V90.4M659.5 87.8V90.2M668.0 91.0V92.4M670.0 90.1V92.6M673.0 93.0V95.7M675.0 91.0V96.3M677.0 91.3V95.3M678.0 89.4V91.4M681.0 87.6V88.8M682.0 86.3V89.4M688.5 85.3V87.2M689.5 84.3V85.5M690.5 80.9V84.6M698.5 82.7V83.9M699.5 82.2V83.4M705.5 84.2V88.6M709.0 79.0V84.6M710.0 78.5V81.7M711.0 77.8V79.0M716.0 80.3V81.5M720.0 83.9V85.6M723.0 83.0V84.2M724.0 78.5V83.3M725.0 75.9V79.7M727.0 79.6V80.9M734.5 81.3V83.9M739.5 77.6V82.7M756.0 143.6V151.7M760.0 141.7V146.5M762.0 145.7V149.1M763.0 139.2V145.9M765.0 135.2V140.0M771.5 145.6V147.0M776.5 151.4V152.6M780.5 153.9V156.5M783.5 151.9V153.8M784.5 151.4V156.0M787.5 151.8V155.3M788.5 147.5V153.1M792.0 149.8V151.5M794.0 147.4V150.0M798.0 147.9V149.1M803.0 148.4V155.5M809.0 153.2V157.8M815.5 158.7V161.7M819.5 159.7V162.1M820.5 151.4V161.5M822.5 151.3V157.0M823.5 147.4V153.1M828.5 156.4V159.5M829.5 152.3V156.4M831.0 145.1V152.3M838.0 159.0V160.2M840.0 157.9V161.6M842.0 155.3V158.2M844.0 154.3V158.6M845.0 149.4V154.3M854.5 166.3V167.8M856.5 165.2V171.4M857.5 157.4V168.3M859.5 156.3V161.1M860.5 153.9V157.9M861.5 150.2V153.9M862.5 146.7V150.2M863.5 145.7V148.7M867.5 155.4V159.1M872.0 163.6V168.9M874.0 164.1V167.9M875.0 159.0V165.2M878.0 164.0V168.7M881.0 164.5V170.5M882.0 163.7V166.3M883.0 158.1V167.4M885.0 152.9V157.8M886.0 152.2V155.5M887.0 151.5V152.7M892.5 154.1V157.2M894.5 151.9V159.4M896.5 155.1V156.3M899.5 152.2V156.4M907.5 156.1V157.3M908.5 152.1V156.1M911.5 150.1V154.4M918.0 152.5V155.5M919.0 151.4V155.4M923.0 152.8V154.0M924.0 152.4V153.6M925.0 149.7V152.4M927.0 150.7V153.9M929.0 147.1V151.0M930.0 145.8V153.0M943.5 153.6V157.1M945.5 153.8V155.0M946.5 149.9V157.3M947.5 148.9V156.0M950.5 149.2V151.5M959.0 154.3V157.9M963.0 159.9V161.2M977.5 168.1V170.2M978.5 168.0V170.3M981.5 165.9V170.7M985.5 163.7V165.1M986.5 162.6V164.7M987.5 161.9V163.1M991.5 171.1V173.6M996.0 170.0V171.2M998.0 168.6V171.2M1004.0 169.8V172.5M1006.0 170.9V172.3M1007.0 170.6V171.8M1009.0 168.6V170.7M1010.0 168.3V169.6M1012.0 167.3V170.4M1014.0 167.2V170.0M1016.5 168.9V170.5M1023.5 172.6V174.2M1026.5 169.6V171.8M1036.0 176.9V181.5M1037.0 175.9V177.9M1038.0 174.0V177.5M1039.0 174.3V176.1M1040.0 173.6V176.7M1042.0 173.0V174.3M1045.0 173.4V174.9M1046.0 172.8V174.0M1055.0 178.6V179.8M1064.5 190.5V191.7M1066.5 190.4V192.7M1069.5 193.1V194.3M1070.5 192.4V194.2M1071.5 188.2V192.7M1072.5 187.6V189.4M1073.5 181.5V188.6M1074.5 178.0V184.1M1089.0 181.1V185.2M1090.0 178.7V181.1M1091.0 175.4V178.7M1093.0 174.9V177.7M1095.0 175.7V176.9M1102.5 172.6V175.5M1103.5 172.4V174.6M1110.5 175.1V179.2M1116.5 178.6V179.9M1118.0 176.8V178.6M1120.0 177.3V178.5M1122.0 180.2V182.1M1123.0 178.9V181.0M1139.5 189.8V191.0M1145.5 188.4V192.3M1149.5 188.4V190.3M1151.5 189.9V191.1M1159.0 190.3V192.0M1162.0 193.8V196.3M1163.0 192.7V195.4M1164.0 188.7V192.7M1166.0 185.7V188.1M1168.0 181.8V184.4M1173.0 183.7V185.4M1175.0 182.2V184.7M1188.5 188.7V189.9M1191.5 191.0V192.2M1195.5 188.8V191.2M1196.5 188.1V190.2M1202.0 189.2V193.7M1208.0 216.5V221.2M1210.0 217.7V225.4M1215.0 229.8V232.2M1216.0 229.3V230.5M1218.0 225.3V229.8M1220.5 222.3V224.0M1221.5 223.3V226.9M1222.5 221.1V225.0M1223.5 216.7V221.1M1226.5 219.9V221.1M1231.5 218.0V221.1M598.5 59V80M1205.5 212V224"/><path stroke="#0a78e6" d="M10.0 146.5V147.7M11.0 146.1V148.4M17.0 151.7V153.3M20.5 156.1V159.4M23.5 160.1V162.9M24.5 162.9V165.3M26.5 166.0V169.0M27.5 168.8V170.0M29.5 168.2V172.0M33.5 166.3V168.1M35.5 165.7V166.9M36.5 166.9V168.1M37.5 165.2V167.6M39.5 166.0V168.1M42.0 167.5V169.1M45.0 165.7V167.1M52.0 165.8V167.5M56.0 160.3V162.8M61.5 153.8V155.0M68.5 148.8V151.5M72.5 146.9V153.5M78.5 148.7V154.6M86.0 143.3V147.4M91.0 142.9V146.6M94.0 140.5V141.7M95.0 140.3V146.4M98.0 142.2V144.1M104.5 136.6V139.3M105.5 137.7V138.9M107.5 134.4V137.4M108.5 137.3V138.7M111.5 138.6V139.8M112.5 139.7V140.9M118.5 134.8V137.7M119.5 137.5V138.7M120.5 136.8V138.4M122.0 138.4V139.6M123.0 138.0V140.4M124.0 140.1V143.7M133.0 134.5V135.8M135.0 136.4V140.7M136.0 138.7V143.2M137.0 141.3V145.8M147.5 139.1V140.3M152.5 132.8V134.0M163.0 120.1V121.3M168.0 114.0V115.2M173.0 106.7V109.6M174.0 108.4V111.7M176.0 112.4V116.3M178.0 113.8V118.6M179.0 118.0V119.2M180.0 117.6V121.1M183.5 121.4V126.0M185.5 123.6V124.8M187.5 122.1V123.3M190.5 119.4V120.6M192.5 118.7V119.9M196.5 116.8V120.5M197.5 120.1V122.6M199.5 119.4V122.9M202.5 121.0V124.5M205.0 126.3V127.9M207.0 129.7V130.9M211.0 126.5V128.5M214.0 124.7V127.5M220.0 120.2V121.4M228.5 116.4V117.6M231.5 117.8V119.5M232.5 118.8V120.4M233.5 118.9V120.8M235.5 119.7V120.9M236.5 120.0V122.3M237.5 122.3V123.5M241.5 122.8V126.4M243.5 124.9V126.5M245.0 125.3V127.1M246.0 124.7V125.9M254.0 117.0V120.2M268.5 116.1V117.7M275.5 111.9V113.4M276.5 112.3V114.7M278.5 112.5V115.0M280.5 110.7V113.9M283.5 110.9V113.3M287.0 109.3V110.7M293.0 108.8V110.0M296.0 107.7V110.5M300.0 108.9V111.1M308.5 110.2V111.8M310.5 110.9V112.5M314.5 110.2V113.2M315.5 110.9V114.1M317.5 110.7V111.9M318.5 109.5V113.1M319.5 112.4V114.3M322.5 114.2V115.4M323.5 115.1V116.3M326.5 116.6V119.4M332.0 110.6V114.1M334.0 108.8V110.0M337.0 106.2V109.1M340.0 110.4V112.3M341.0 109.2V112.2M344.0 108.8V113.0M348.5 112.3V114.0M349.5 113.5V115.5M352.5 112.6V117.5M354.5 115.1V116.5M359.5 114.9V116.3M366.5 108.8V111.3M367.5 108.7V111.3M372.0 110.4V114.5M375.0 113.7V116.3M382.0 117.5V120.7M385.0 123.1V124.3M387.0 124.7V125.9M388.0 124.4V130.2M391.5 126.5V131.1M393.5 128.2V129.4M394.5 129.1V130.9M397.5 128.0V129.2M400.5 124.9V126.1M404.5 123.7V126.7M406.5 126.1V127.5M407.5 127.5V131.0M410.0 126.6V127.8M416.0 121.1V122.5M419.0 121.3V125.6M423.0 117.5V120.6M426.0 121.4V124.3M427.0 123.7V126.5M428.0 124.2V126.2M430.5 123.9V125.8M431.5 125.8V128.1M432.5 127.6V130.3M433.5 129.0V131.9M439.5 126.6V129.9M441.5 131.9V134.7M451.5 112.4V113.6M455.5 109.6V114.5M462.0 104.0V109.6M469.0 104.8V106.2M470.0 105.7V108.9M479.0 91.9V99.4M484.5 89.1V94.5M485.5 90.8V94.3M486.5 94.3V95.5M487.5 93.5V98.8M489.5 97.0V101.0M493.5 95.2V98.2M494.5 98.2V99.4M497.5 95.5V97.0M500.5 93.1V95.7M506.0 95.9V97.1M507.0 96.8V98.0M509.0 90.2V97.7M515.0 86.2V95.1M517.0 90.0V92.6M523.5 87.5V89.7M524.5 89.3V90.5M525.5 89.3V93.2M527.5 89.6V93.0M532.5 88.1V89.3M533.5 88.2V89.4M538.5 89.5V90.7M540.5 92.3V93.5M544.0 92.5V93.8M548.0 90.0V95.5M551.0 90.2V91.8M552.0 90.9V92.1M556.0 85.6V87.0M558.0 85.1V86.3M560.0 83.2V85.8M563.0 82.3V83.5M566.5 79.9V81.1M571.5 76.7V80.6M573.5 77.1V80.2M575.5 79.1V81.1M587.0 77.1V78.3M591.0 78.4V80.9M594.0 80.2V82.6M595.0 81.7V82.9M596.0 82.3V83.5M600.0 68.0V69.7M601.0 69.7V72.7M605.5 73.9V76.3M606.5 74.8V79.5M607.5 78.0V81.5M610.5 85.1V86.3M611.5 85.3V87.7M613.5 86.2V91.2M615.5 88.2V89.4M617.5 87.5V90.0M619.5 88.3V91.5M622.5 88.9V91.7M629.0 85.1V86.3M631.0 83.6V85.1M632.0 84.1V87.6M635.0 86.8V89.1M636.0 89.0V90.2M637.0 88.5V91.9M641.0 86.6V87.8M643.0 85.7V89.5M648.5 90.4V91.6M652.5 87.6V89.9M654.5 89.0V90.4M662.5 90.7V92.0M663.5 90.1V91.3M664.5 89.2V91.1M665.5 91.1V92.3M667.0 91.5V94.4M669.0 89.8V93.4M671.0 90.5V93.3M674.0 93.8V96.3M679.0 88.2V89.4M680.0 88.2V89.4M684.0 86.1V89.0M691.5 80.8V82.0M692.5 81.1V82.4M693.5 80.9V83.6M694.5 82.1V83.6M703.5 82.1V85.4M704.5 85.4V87.9M706.5 83.8V86.3M713.0 78.5V80.1M714.0 79.0V80.2M715.0 79.7V80.9M718.0 80.4V82.8M719.0 81.8V87.0M722.0 82.5V83.7M726.0 78.8V80.7M729.5 80.8V82.1M738.5 80.9V82.1M740.5 79.1V80.3M741.5 79.1V80.7M742.5 80.1V83.0M743.5 82.4V87.4M744.5 87.4V89.8M745.5 89.8V92.0M746.5 92.0V96.9M747.5 95.5V105.1M749.0 105.1V115.1M750.0 112.9V116.2M751.0 116.2V121.3M752.0 120.8V128.6M753.0 127.0V132.9M754.0 132.9V144.7M755.0 144.7V147.7M759.0 141.9V146.5M761.0 137.8V147.9M764.0 139.1V140.3M766.0 136.1V141.8M769.5 141.8V145.7M770.5 143.8V147.9M774.5 148.4V153.4M777.5 151.4V152.9M778.5 152.9V155.1M779.5 152.9V154.2M785.5 150.6V151.8M786.5 150.6V154.2M790.0 145.0V151.0M791.0 148.2V151.5M793.0 149.8V151.0M795.0 145.2V151.7M797.0 145.5V148.5M799.0 145.2V152.7M801.0 151.9V154.8M804.0 153.7V156.4M805.0 156.0V160.3M810.5 153.2V154.5M812.5 150.8V156.2M813.5 154.7V163.2M816.5 160.3V161.7M824.5 148.1V153.9M825.5 151.2V153.5M826.5 153.5V157.9M833.0 147.9V156.2M835.0 155.8V157.2M837.0 158.2V161.3M839.0 159.4V161.6M841.0 157.9V159.1M843.0 155.4V158.6M848.0 149.9V152.5M849.0 149.9V159.3M850.0 153.8V161.5M851.5 159.8V161.0M852.5 160.9V166.2M853.5 164.3V167.6M855.5 163.6V171.4M858.5 158.8V163.5M864.5 145.0V148.3M865.5 144.9V153.9M866.5 153.1V157.1M868.5 153.6V158.9M870.5 159.0V166.8M876.0 157.8V167.2M877.0 165.7V171.6M879.0 161.0V167.5M880.0 166.1V167.5M888.0 151.5V152.7M890.0 152.5V156.3M891.0 152.4V156.3M893.5 154.1V160.3M895.5 153.8V157.2M897.5 155.1V157.5M900.5 154.0V157.1M904.5 155.3V158.8M905.5 157.1V158.3M910.5 151.2V153.6M913.0 149.6V153.7M914.0 152.6V155.1M916.0 149.4V154.8M917.0 152.5V155.5M933.5 148.7V151.0M935.5 150.2V153.8M936.5 153.8V155.0M938.5 154.0V158.4M942.5 156.2V157.4M948.5 149.6V150.8M951.5 149.8V155.3M952.5 155.0V156.2M954.0 155.0V158.0M955.0 155.1V156.3M960.0 155.1V158.3M961.0 158.3V160.1M964.0 160.7V163.0M965.0 160.3V165.9M966.0 164.3V166.0M967.0 163.4V167.3M970.0 166.3V169.9M972.0 166.6V167.8M973.0 166.4V168.6M974.5 166.7V167.9M976.5 166.9V169.0M983.5 164.3V165.5M984.5 164.1V165.3M988.5 161.9V167.1M989.5 166.3V170.9M990.5 170.9V173.0M995.0 171.1V172.3M999.0 168.6V169.8M1002.0 169.7V172.4M1013.0 167.7V169.9M1015.5 166.7V169.8M1017.5 168.2V171.2M1018.5 170.2V172.0M1019.5 168.8V171.7M1021.5 172.4V174.0M1022.5 172.9V174.1M1024.5 172.3V173.8M1027.5 171.3V173.0M1028.5 172.4V173.6M1030.5 171.9V176.2M1031.5 175.1V177.6M1033.5 178.8V180.6M1041.0 173.7V174.9M1044.0 172.5V175.0M1047.0 172.8V174.4M1048.0 174.4V176.3M1050.0 173.0V175.9M1051.0 174.1V175.3M1052.0 175.3V176.5M1053.0 176.0V178.2M1057.5 179.8V182.6M1058.5 182.6V183.9M1061.5 186.0V189.2M1063.5 188.6V191.2M1065.5 190.5V192.6M1067.5 189.7V191.9M1068.5 191.9V193.1M1077.0 176.6V179.4M1079.0 178.0V179.4M1080.0 179.2V184.2M1082.0 180.5V183.7M1083.0 180.9V185.1M1084.0 184.8V186.0M1085.0 184.0V185.2M1086.0 184.5V185.7M1088.0 181.0V184.8M1092.0 175.4V177.7M1097.5 174.7V175.9M1098.5 173.8V176.3M1099.5 175.7V176.9M1100.5 175.7V176.9M1101.5 174.9V176.1M1105.5 172.9V176.5M1108.5 176.0V177.2M1109.5 176.4V182.0M1111.5 176.7V177.9M1113.5 178.3V179.7M1114.5 179.0V180.2M1115.5 178.3V179.9M1119.0 177.3V178.5M1121.0 178.4V182.9M1126.0 181.8V183.4M1127.0 183.0V184.2M1128.0 183.2V185.2M1130.0 184.9V186.1M1131.0 185.2V187.6M1134.0 186.6V188.4M1137.0 189.7V190.9M1140.5 189.2V191.5M1142.5 188.8V191.7M1143.5 190.1V191.8M1146.5 189.4V190.6M1150.5 187.1V189.9M1153.5 189.2V191.4M1155.5 187.5V192.3M1157.5 189.9V191.4M1160.0 191.7V195.3M1161.0 193.7V198.9M1169.0 181.6V183.3M1170.0 180.5V183.8M1171.0 183.8V185.0M1172.0 184.4V185.6M1174.0 181.9V183.9M1176.0 181.5V184.1M1180.5 183.1V185.8M1181.5 183.2V184.4M1182.5 183.6V187.3M1184.5 186.3V187.5M1186.5 188.0V189.2M1189.5 189.8V192.1M1192.5 190.8V192.0M1194.5 188.9V191.5M1197.5 189.0V190.2M1199.0 187.3V192.9M1201.0 191.2V193.7M1203.0 190.5V191.8M1204.0 191.7V193.9M1205.0 193.6V201.4M1206.0 200.7V220.3M1209.0 216.5V221.6M1212.0 215.5V222.6M1213.0 220.8V227.3M1214.0 227.3V232.2M1225.5 219.9V223.3M1227.5 218.0V220.4M1228.5 219.8V225.1M753.5 140V156M790.5 150V163"/></g></g>
<g clip-path="url(#k2)"><g fill="none" stroke-width="1.1" shape-rendering="crispEdges"><path stroke="#f0e25a" stroke-width="1" d="M53.0 365.5h2M56.0 358.0V359.6M74.5 338.5V340.2M89.0 302.3V304.1M101.5 276.5h3M113.5 291.5h2M127.0 308.5h2M129.0 306.8V308.1M132.0 303.5h3M134.0 303.5h2M143.5 301.3V302.8M149.5 302.5h2M153.5 295.5V297.1M154.5 295.5V296.9M154.5 297.5h2M159.5 294.5h2M163.0 289.5h2M174.0 290.5h2M179.0 298.5h2M181.0 297.5h2M185.5 299.8V301.1M191.5 298.7V300.1M196.5 299.5h3M200.5 301.0V302.3M201.5 302.3V303.5M204.0 305.4V306.7M206.0 308.5h3M207.0 308.5h3M215.0 306.5h2M230.5 304.5h2M234.5 307.5h3M235.5 307.5h3M237.5 307.1V308.6M245.0 311.5h2M246.0 310.5h2M263.0 304.4V305.9M268.5 306.5h2M269.5 306.5h3M271.5 305.5V306.8M272.5 303.5h3M273.5 303.5h2M280.5 299.3V301.4M282.5 302.5h3M288.0 302.7V303.9M289.0 303.5h2M295.0 303.5h2M301.0 301.5h2M303.0 300.4V301.8M308.5 303.5h3M318.5 311.5h2M321.5 310.7V312.0M325.5 314.5h3M329.0 310.9V312.7M329.0 311.5h2M335.0 308.8V310.2M337.0 309.5h2M339.0 309.5h2M340.0 309.5h2M344.0 310.5h2M348.5 312.8V314.9M365.5 307.5h2M372.0 313.5V315.6M377.0 322.5V324.5M378.0 325.5h2M387.0 332.5h3M394.5 348.5h3M407.5 362.4V363.9M407.5 363.5h2M410.0 359.5h3M418.0 359.5h3M430.5 341.5h2M433.5 338.5V340.0M454.5 314.7V316.2M467.0 290.5h2M473.0 281.5h2M476.0 281.3V283.1M479.0 285.8V287.7M483.5 280.5h2M487.5 288.5h2M488.5 288.5h3M500.5 286.1V288.1M504.0 282.8V284.9M504.0 285.5h2M509.0 288.5h3M512.0 288.5h2M520.0 287.0V288.6M523.5 284.9V286.8M523.5 287.5h3M524.5 287.5h3M527.5 291.5h2M532.5 292.1V294.3M532.5 295.5h2M537.5 298.5h2M538.5 298.5h3M544.0 299.5h3M554.0 298.0V299.3M556.0 299.5h3M564.5 295.5h3M570.5 288.5h2M573.5 287.5h2M575.5 285.5h2M578.5 287.5h2M580.5 286.5h2M581.5 285.5h2M585.0 282.1V283.3M587.0 281.5h2M588.0 281.5h2M591.0 280.5h3M592.0 280.5h2M595.0 280.8V282.3M600.0 278.5h3M603.0 282.5h2M612.5 302.5h2M615.5 304.1V305.8M617.5 309.5h2M627.0 306.5h2M630.0 306.2V307.9M630.0 308.5h2M635.0 307.5h3M637.0 305.6V307.2M642.0 291.3V292.9M649.5 296.9V298.2M653.5 291.5h2M655.5 290.1V291.7M657.5 292.5h2M661.5 295.5h3M666.0 298.5h2M667.0 299.5h2M673.0 302.1V304.0M678.0 298.5h2M681.0 297.5h2M685.0 296.1V298.1M685.0 298.5h2M687.5 298.5h2M695.5 291.5h3M699.5 293.5h2M702.5 297.5h3M705.5 304.5h2M710.0 308.5h2M711.0 309.5h2M715.0 311.5h2M717.0 310.8V312.2M732.5 309.5h2M737.5 311.5h3M738.5 311.5h2M745.5 313.6V315.2M750.0 324.4V326.6M752.0 322.4V324.3M762.0 329.7V331.0M768.0 320.3V322.4M775.5 341.5h2M783.5 353.5h2M787.5 347.6V349.6M790.0 343.4V344.6M798.0 332.5h2M800.0 334.5h2M841.0 337.5h2M845.0 339.1V341.2M858.5 371.5h2M864.5 366.3V368.0M865.5 366.3V368.3M867.5 371.0V372.9M878.0 395.5h2M880.0 398.5h2M882.0 397.3V398.8M883.0 395.9V397.3M891.5 381.5h3M900.5 381.1V382.8M908.5 397.5h2M926.0 409.5h2M933.5 411.5h2M939.5 408.8V410.6M954.0 399.5h3M960.0 392.7V394.1M966.0 400.0V402.1M968.0 404.5h2M975.5 412.5h2M978.5 413.5h2M996.0 423.5h2M998.0 423.5h2M1003.0 423.5h3M1006.0 423.5h2M1010.0 424.5h2M1012.0 423.8V425.4M1013.0 425.4V426.7M1020.5 437.5h2M1022.5 438.5h3M1027.5 440.2V441.7M1027.5 442.5h2M1029.5 440.5h2M1037.0 439.4V440.8M1037.0 441.5h3M1042.0 438.5h3M1047.0 435.5V437.1M1049.0 438.4V439.9M1049.0 440.5h3M1051.0 440.5h2M1059.5 444.2V445.8M1065.5 451.6V453.7M1066.5 450.5h2M1080.0 438.4V439.7M1080.0 440.5h2M1089.0 435.5V437.0M1101.5 420.5h3M1106.5 420.5h2M1112.5 431.1V433.0M1119.0 429.0V431.0M1123.0 433.5h3M1131.0 436.5h2M1134.0 436.5h3M1135.0 437.5h3M1140.5 444.2V445.6M1140.5 445.5h2M1141.5 445.5h2M1149.5 450.5h3M1155.5 453.5h2M1156.5 453.5h2M1158.0 454.5h2M1159.0 455.5h3M1171.0 450.5h3M1172.0 450.5h2M1178.5 448.5h2M1183.5 447.6V448.9M1187.5 453.5h2M1191.5 451.4V453.3M1191.5 451.5h2M1199.0 456.5h2M1205.0 468.5h2M1210.0 472.5h2M1212.0 469.5h2M1217.0 471.7V473.6M1223.5 478.3V480.1M1226.5 470.5h2M1230.5 460.8V462.1M14.0 344.5h2M27.0 353.5h2M30.0 362.5h2M33.0 356.5h2M37.0 356.5h2M42.0 342.5h2M45.0 327.5h2M47.0 336.5h2M52.0 344.5h2"/><path stroke="#f00010" d="M55.0 359.6V365.8M57.0 354.4V358.0M59.0 353.4V359.6M60.0 346.8V353.4M61.5 340.5V349.4M62.5 331.7V344.6M63.5 330.4V336.1M70.5 339.7V344.4M71.5 332.4V339.7M75.5 333.3V340.6M76.5 323.4V340.5M79.5 328.0V329.2M81.0 321.3V328.3M82.0 320.6V328.7M83.0 318.8V324.3M85.0 308.3V315.0M87.0 305.9V310.6M88.0 302.3V308.9M91.0 306.1V307.3M92.0 304.3V315.0M93.0 295.4V304.3M94.0 286.4V295.4M95.0 282.8V294.5M98.0 284.7V285.9M100.0 281.1V288.8M101.5 274.4V281.1M108.5 294.0V299.8M109.5 296.6V298.7M110.5 292.5V296.6M112.5 290.6V302.1M113.5 291.1V300.7M120.5 299.2V300.4M126.0 306.7V309.7M131.0 304.2V309.7M132.0 300.4V306.2M137.0 301.5V304.0M138.0 301.5V302.7M142.5 301.3V302.5M147.5 305.5V306.7M148.5 305.5V307.2M149.5 300.0V306.4M151.5 298.7V301.9M152.5 294.8V299.2M157.5 294.9V300.8M158.5 294.5V298.0M159.5 291.2V294.7M161.5 291.3V295.6M163.0 289.2V291.5M165.0 286.6V291.7M166.0 280.2V286.6M168.0 282.1V284.3M181.0 293.5V299.6M187.5 300.6V301.8M189.5 298.8V304.1M190.5 298.3V300.1M193.5 298.9V300.1M195.5 298.1V300.8M198.5 297.6V300.0M206.0 306.2V311.2M213.0 307.8V309.0M214.0 307.9V309.1M215.0 306.4V308.2M217.0 305.0V306.2M220.0 304.7V305.9M223.0 307.4V308.7M224.5 306.1V310.2M226.5 304.0V305.2M227.5 302.2V304.6M229.5 302.6V304.1M243.5 313.5V315.2M245.0 310.3V318.9M248.0 308.5V310.1M249.0 305.9V309.9M251.0 302.8V305.8M253.0 303.5V304.7M254.0 301.8V303.5M255.0 301.8V303.8M256.0 303.0V304.2M260.0 307.1V308.3M262.0 304.9V307.3M266.5 304.1V307.8M267.5 305.4V306.6M272.5 302.7V309.5M275.5 301.0V303.1M277.5 299.1V300.8M279.5 301.4V303.0M286.0 302.1V303.3M289.0 301.9V303.9M293.0 305.4V306.6M294.0 303.3V306.3M295.0 301.3V303.3M297.0 301.8V303.6M299.0 301.3V304.4M300.0 298.9V302.6M305.0 299.7V304.8M307.5 301.5V303.0M312.5 306.5V307.9M316.5 307.4V310.9M317.5 309.1V310.7M322.5 311.2V313.6M328.0 312.3V314.7M331.0 309.6V312.3M343.0 309.7V311.2M346.0 309.2V310.4M349.5 312.3V314.9M350.5 314.4V315.6M351.5 313.1V317.5M353.5 315.4V316.6M355.5 313.1V315.4M356.5 311.9V314.3M357.5 310.2V312.2M358.5 307.0V311.5M360.5 308.5V309.7M362.5 303.1V309.0M364.5 307.2V308.4M376.0 321.9V323.1M380.0 324.7V327.1M381.0 324.2V325.6M386.0 337.4V340.4M393.5 343.5V344.8M398.5 352.9V357.1M400.5 356.7V358.3M401.5 352.6V356.7M402.5 352.7V357.7M404.5 357.5V362.3M410.0 357.7V366.6M412.0 354.9V358.7M413.0 347.6V354.9M417.0 357.6V359.1M421.0 350.6V362.5M422.0 348.1V350.6M423.0 343.9V348.1M424.0 338.0V343.9M425.0 339.2V340.4M426.0 335.7V345.9M432.5 332.9V341.5M435.5 337.0V341.0M442.5 352.5V361.7M443.5 349.3V355.5M444.5 341.8V353.2M445.5 335.2V343.3M450.5 330.0V331.2M451.5 308.5V330.0M453.5 314.7V316.0M455.5 311.6V316.2M456.5 309.1V315.0M457.5 304.2V309.5M458.5 292.2V306.3M459.5 295.0V305.8M460.5 289.6V295.0M464.0 293.2V300.5M465.0 293.3V298.3M466.0 290.6V294.2M469.0 283.7V290.4M470.0 286.6V288.0M471.0 282.6V291.0M472.0 278.9V282.6M481.0 287.0V290.8M482.5 283.1V289.0M483.5 280.3V283.1M493.5 289.5V295.2M495.5 284.4V292.7M497.5 287.4V290.5M498.5 285.5V287.7M501.5 283.0V287.6M506.0 286.0V290.7M509.0 288.1V292.6M514.0 287.8V295.2M518.0 285.6V292.2M521.0 287.0V288.2M522.0 282.2V289.3M535.5 295.6V297.5M544.0 296.5V299.9M547.0 302.2V303.4M551.0 300.4V303.9M552.0 300.4V302.1M553.0 299.3V302.6M555.0 291.4V299.4M559.0 296.8V299.2M560.0 295.9V298.7M561.0 297.7V298.9M562.0 296.1V299.7M563.0 292.7V296.1M568.5 292.2V293.4M569.5 289.9V292.7M573.5 287.3V289.4M575.5 282.7V286.3M577.5 284.8V286.0M583.5 282.1V285.8M586.0 280.7V284.4M600.0 278.1V283.1M622.5 308.9V312.2M639.0 298.5V303.1M643.0 289.5V294.6M671.0 301.6V303.8M687.5 296.8V299.7M689.5 293.7V299.1M714.0 310.4V311.6M720.0 309.3V312.5M722.0 299.4V304.4M756.0 337.3V343.6M757.0 333.0V338.9M758.0 330.4V335.4M759.0 329.6V332.9M763.0 322.8V334.4M764.0 318.6V322.8M765.0 314.5V318.6M783.5 352.5V356.9M785.5 351.8V353.7M786.5 349.6V351.8M788.5 344.6V353.7M791.0 339.0V343.4M792.0 337.1V339.0M794.0 328.2V337.1M797.0 329.9V334.3M802.0 329.5V334.1M804.0 327.1V335.4M805.0 325.8V327.5M807.0 320.6V324.3M808.0 312.1V320.6M820.5 365.5V366.9M827.5 394.1V397.9M828.5 387.0V397.6M831.0 364.8V379.3M832.0 354.7V366.2M833.0 352.2V355.2M837.0 358.0V361.6M838.0 353.8V358.0M839.0 348.6V356.9M841.0 336.6V344.3M844.0 334.9V339.1M846.0 339.8V346.2M847.0 337.0V346.6M848.0 337.8V341.0M855.5 374.7V377.2M856.5 366.5V374.7M861.5 371.0V373.3M863.5 368.0V371.3M869.5 370.8V373.6M872.0 374.5V375.7M886.0 392.0V396.1M887.0 390.8V399.2M889.0 381.0V390.2M891.0 381.1V383.9M896.5 376.6V383.8M897.5 376.4V377.6M902.5 386.0V387.9M903.5 385.4V386.7M910.5 394.2V399.3M911.5 389.9V398.2M918.0 404.2V410.2M920.0 403.4V414.0M921.0 411.1V412.3M922.0 410.4V412.6M923.0 408.3V412.6M924.0 405.6V410.9M925.0 409.8V411.0M928.0 407.4V408.6M929.0 402.2V408.3M931.0 404.7V412.0M935.5 405.0V411.4M936.5 408.8V414.3M943.5 413.4V416.2M944.5 410.7V414.3M945.5 408.8V411.2M946.5 404.0V408.8M947.5 402.3V406.7M948.5 398.9V402.4M949.5 393.3V403.8M954.0 399.3V406.0M957.0 394.0V401.5M959.0 390.3V395.6M961.0 389.4V395.3M965.0 400.0V408.2M967.0 402.1V403.3M974.5 409.8V412.1M978.5 411.2V413.3M980.5 411.4V414.7M989.5 425.1V428.0M991.5 425.2V431.3M993.5 428.5V431.6M996.0 420.7V425.1M998.0 418.3V423.5M1001.0 420.4V427.2M1029.5 437.2V442.3M1036.0 437.3V444.9M1054.0 440.6V442.2M1055.0 437.7V440.6M1069.5 451.6V452.8M1071.5 450.1V452.6M1092.0 427.6V432.1M1145.5 446.0V449.4M1167.0 450.4V452.3M1202.0 456.3V460.4M1207.0 464.4V474.3M1212.0 463.5V475.2M1221.5 471.8V474.3M1224.5 473.2V480.4M1229.5 455.4V470.0M18.5 344.0v6.3M43.5 329.0v5.6M853.5 355V381M1223.5 470V486M1229.5 455V470M942.5 406V420M620.5 306V314"/><path stroke="#0a78e6" d="M58.0 354.4V356.2M64.5 328.7V336.5M66.5 334.5V338.6M67.5 334.7V340.9M68.5 339.4V341.5M69.5 337.5V346.7M72.5 334.6V340.2M73.5 335.2V338.5M77.5 324.4V328.2M78.5 318.6V328.0M86.0 307.7V310.6M90.0 298.9V312.4M96.0 282.8V288.8M97.0 283.9V286.3M99.0 280.8V287.9M104.5 283.2V289.3M105.5 289.3V294.9M106.5 294.2V297.4M107.5 297.4V299.8M111.5 294.8V297.4M115.5 290.9V292.1M116.5 290.9V293.3M117.5 289.9V293.6M118.5 292.5V299.1M119.5 295.9V299.3M122.0 299.2V308.9M123.0 299.9V307.3M124.0 296.9V306.5M125.0 305.3V309.7M127.0 306.7V308.2M130.0 306.8V309.3M134.0 302.8V304.0M136.0 302.2V303.4M139.0 301.5V306.7M140.0 302.0V303.2M141.0 300.0V302.4M144.5 300.5V304.4M145.5 304.4V306.3M146.5 305.6V306.8M156.5 296.5V301.7M167.0 283.0V284.2M169.0 282.1V283.3M170.0 281.5V284.4M171.0 283.6V286.5M173.0 283.3V285.4M174.0 285.1V289.6M176.0 290.1V292.1M178.0 290.9V293.2M179.0 293.1V297.8M183.5 297.2V299.8M184.5 299.8V301.0M186.5 300.4V301.6M188.5 301.4V302.6M194.5 296.4V302.5M196.5 298.1V301.4M199.5 300.0V301.2M202.5 300.2V306.7M205.0 306.7V311.8M209.0 307.3V308.5M210.0 305.5V310.1M218.0 305.0V306.2M219.0 305.3V306.5M221.0 305.1V310.2M222.0 306.7V309.9M225.5 305.1V306.5M228.5 302.2V304.3M230.5 301.1V303.6M232.5 304.8V307.3M233.5 306.2V307.4M234.5 305.0V306.9M238.5 308.6V309.8M239.5 308.6V311.7M240.5 307.1V311.4M242.5 312.2V315.9M250.0 304.2V305.9M257.0 303.0V306.1M258.0 302.5V306.1M259.0 305.5V309.2M261.0 307.1V308.3M264.0 304.3V305.5M265.5 304.5V307.3M268.5 302.8V305.6M278.5 299.5V301.7M281.5 299.3V301.0M282.5 301.0V304.0M284.5 301.9V305.4M287.0 302.1V303.3M291.0 303.8V307.9M292.0 304.3V307.2M298.0 301.8V303.0M301.0 300.6V301.8M304.0 300.4V303.1M306.0 302.3V304.3M308.5 301.5V303.4M310.5 303.5V307.8M311.5 303.0V306.5M313.5 306.8V309.2M314.5 309.2V310.8M315.5 308.9V312.2M320.5 310.3V311.5M323.5 309.0V311.8M325.5 313.3V314.5M332.0 308.5V310.8M334.0 309.6V310.8M336.0 308.7V312.0M337.0 307.9V310.0M339.0 308.5V309.9M342.0 303.7V311.0M344.0 308.6V309.8M347.0 303.5V313.3M352.5 313.9V316.5M354.5 314.2V315.4M359.5 309.4V310.6M363.5 303.9V307.6M365.5 307.2V308.4M367.5 305.9V312.9M369.0 309.4V310.6M370.0 309.9V311.6M371.0 308.8V313.5M373.0 313.4V319.1M374.0 319.1V320.5M375.0 320.5V321.9M378.0 324.4V326.1M382.0 324.2V329.9M383.0 329.9V338.8M384.0 333.1V343.1M385.0 340.4V341.6M389.5 328.9V336.9M390.5 334.6V339.7M391.5 339.7V343.2M392.5 343.2V344.8M394.5 341.7V351.7M397.5 347.4V358.2M403.5 352.7V360.2M405.5 358.6V361.2M406.5 360.4V363.9M414.0 350.5V354.7M415.0 346.7V359.1M418.0 357.6V361.6M420.0 359.1V369.7M427.0 332.6V342.4M429.0 336.7V344.2M430.5 335.4V340.8M434.5 332.8V341.1M436.5 337.0V345.7M437.5 345.7V348.7M438.5 348.7V354.0M439.5 354.0V355.2M440.5 355.0V360.3M441.5 355.6V358.8M446.5 332.0V339.0M447.5 339.0V342.8M452.5 310.1V316.0M462.0 287.8V293.8M463.0 293.3V302.0M467.0 288.1V291.9M473.0 277.3V281.7M475.0 279.8V281.3M477.0 283.1V285.8M478.0 281.2V287.7M480.0 285.8V290.1M485.5 279.6V281.7M486.5 278.7V289.3M487.5 284.7V287.9M490.5 288.1V289.3M491.5 288.5V291.5M494.5 289.5V292.7M496.5 286.1V290.5M499.5 287.6V288.8M508.0 286.3V291.1M512.0 283.7V287.8M516.0 288.3V290.5M526.5 284.4V288.7M536.5 296.0V297.2M537.5 297.1V298.6M540.5 297.0V299.5M542.5 298.7V299.9M546.0 295.3V302.5M556.0 296.1V302.0M558.0 298.7V299.9M564.5 294.6V295.8M567.5 289.5V292.7M578.5 283.6V288.8M580.5 286.3V287.5M591.0 278.3V282.3M594.0 279.3V282.5M598.0 276.3V281.8M599.0 279.7V280.9M609.5 294.0V295.2M610.5 293.7V299.3M611.5 299.3V303.3M612.5 301.7V303.1M669.0 298.0V301.0M670.0 301.0V305.7M683.0 295.7V297.3M702.5 293.9V297.9M708.0 299.6V306.8M727.0 298.8V305.2M742.5 308.9V310.1M744.5 308.0V313.6M747.5 317.7V320.6M749.0 320.6V326.6M753.0 320.9V330.9M754.0 330.9V343.3M755.0 337.7V342.4M760.0 329.6V332.8M766.0 314.5V315.7M767.0 315.3V322.4M769.5 320.3V326.2M770.5 325.4V334.7M772.5 328.0V331.6M773.5 331.6V334.0M774.5 334.0V345.4M775.5 337.7V340.5M777.5 341.2V346.9M778.5 346.9V349.6M779.5 349.6V353.4M780.5 353.4V354.6M781.5 352.4V360.1M793.0 333.3V337.1M798.0 329.9V334.1M800.0 332.0V334.6M803.0 331.1V332.7M809.0 318.1V321.5M810.5 319.3V333.6M812.5 336.3V345.4M814.5 342.4V346.4M815.5 346.4V349.0M816.5 349.0V352.0M817.5 347.4V358.4M818.5 357.8V361.2M819.5 360.9V366.9M821.5 365.5V366.9M822.5 366.9V369.4M823.5 366.6V376.0M824.5 374.1V383.2M825.5 383.2V391.3M834.0 352.2V354.0M835.0 350.2V354.8M836.0 354.8V360.7M849.0 337.8V339.0M852.5 337.6V352.7M853.5 350.1V370.7M854.5 370.7V377.2M858.5 359.4V370.9M860.5 371.5V378.1M866.5 366.0V371.0M870.5 371.9V375.1M873.0 374.0V377.1M874.0 374.8V378.7M875.0 378.7V382.2M876.0 382.0V393.3M877.0 386.2V389.4M878.0 387.0V394.1M880.0 392.1V398.0M884.0 395.9V400.2M888.0 390.2V391.4M890.0 376.2V383.9M893.5 381.0V383.5M895.5 374.3V381.5M898.5 376.4V379.5M899.5 379.5V383.7M904.5 385.5V388.8M905.5 388.8V395.8M906.5 395.8V400.1M907.5 396.9V398.1M908.5 396.9V398.4M913.0 389.9V391.6M914.0 390.0V394.8M915.0 389.5V400.3M916.0 399.9V404.9M917.0 404.5V410.2M919.0 409.9V411.5M930.0 404.5V407.2M932.0 403.4V406.2M933.5 403.8V411.3M950.5 395.1V396.3M952.5 400.1V404.4M958.0 391.1V395.6M962.0 393.4V394.6M963.0 387.3V400.2M968.0 401.3V404.8M970.0 404.6V406.8M971.0 405.7V411.6M972.0 407.4V412.4M973.0 407.9V411.4M975.5 411.8V413.0M981.5 411.4V413.2M982.5 411.3V419.0M983.5 411.6V419.6M986.5 422.0V425.2M987.5 421.4V432.3M992.5 425.2V431.6M1000.0 422.5V424.9M1018.5 432.9V435.6M1032.5 440.2V444.5M1033.5 444.5V447.9M1057.5 439.4V444.9M1060.5 445.8V447.6M1062.5 449.9V453.6M1082.0 440.8V442.0M1086.0 440.1V441.3M1100.5 420.4V422.3M1104.5 417.6V418.9M1111.5 426.5V431.1M1120.0 429.0V430.3M1121.0 428.1V432.1M1125.0 433.4V434.6M1126.0 434.1V435.3M1147.5 447.3V450.0M1161.0 452.5V454.7M1177.0 447.1V448.3M1184.5 448.9V450.1M1187.5 449.5V453.5M1199.0 451.9V457.0M1201.0 455.5V458.9M1208.0 465.9V474.7M1210.0 468.6V472.0M1222.5 468.1V478.3M12.5 338.0v6.2M39.5 346.0v5.4M826.5 372V398M808.5 313V332M1202.5 452V470"/></g></g>
<path clip-path="url(#k3)" d="M8.0 613.0 9.0 612.0 10.0 613.0 11.0 615.0 12.0 614.0 13.0 612.0 14.0 609.0 15.0 609.0 16.0 610.0 17.0 611.0 18.0 609.0 19.0 611.0 20.0 616.0 21.0 616.0 22.0 619.0 23.0 623.0 24.0 623.0 25.0 628.0 26.0 619.0 27.0 611.0 28.0 612.0 29.0 613.0 30.0 612.0 31.0 615.0 32.0 618.0 33.0 616.0 34.0 613.0 35.0 611.0 36.0 610.0 37.0 613.0 38.0 615.0 39.0 617.0 40.0 622.0 41.0 624.0 42.0 628.0 43.0 631.0 44.0 638.0 45.0 642.0 46.0 639.0 47.0 634.0 48.0 630.0 49.0 629.0 50.0 628.0 51.0 629.0 52.0 628.0 53.0 630.0 54.0 632.0 55.0 600.0 56.0 605.0 57.0 606.0 58.0 608.0 59.0 605.0 60.0 606.0 61.0 611.0 62.0 614.0 63.0 620.0 64.0 618.0 65.0 614.0 66.0 613.0 67.0 613.0 68.0 612.0 69.0 612.0 70.0 610.0 71.0 617.0 72.0 620.0 73.0 623.0 74.0 624.0 75.0 623.0 76.0 626.0 77.0 627.0 78.0 627.0 79.0 627.0 80.0 627.0 81.0 631.0 82.0 635.0 83.0 635.0 84.0 641.0 85.0 640.0 86.0 641.0 87.0 642.0 88.0 641.0 89.0 642.0 90.0 640.0 91.0 638.0 92.0 643.0 93.0 648.0 94.0 655.0 95.0 662.0 96.0 661.0 97.0 662.0 98.0 662.0 99.0 661.0 100.0 662.0 101.0 665.0 102.0 664.0 103.0 657.0 104.0 652.0 105.0 648.0 106.0 646.0 107.0 645.0 108.0 640.0 109.0 646.0 110.0 647.0 111.0 648.0 112.0 651.0 113.0 651.0 114.0 650.0 115.0 648.0 116.0 646.0 117.0 645.0 118.0 645.0 119.0 645.0 120.0 643.0 121.0 643.0 122.0 641.0 123.0 641.0 124.0 640.0 125.0 639.0 126.0 639.0 127.0 636.0 128.0 635.0 129.0 634.0 130.0 635.0 131.0 635.0 132.0 634.0 133.0 638.0 134.0 638.0 135.0 642.0 136.0 644.0 137.0 646.0 138.0 647.0 139.0 645.0 140.0 646.0 141.0 647.0 142.0 646.0 143.0 642.0 144.0 640.0 145.0 641.0 146.0 637.0 147.0 635.0 148.0 637.0 149.0 633.0 150.0 636.0 151.0 637.0 152.0 639.0 153.0 639.0 154.0 641.0 155.0 640.0 156.0 638.0 157.0 634.0 158.0 635.0 159.0 634.0 160.0 635.0 161.0 634.0 162.0 636.0 163.0 636.0 164.0 637.0 165.0 638.0 166.0 638.0 167.0 639.0 168.0 638.0 169.0 634.0 170.0 631.0 171.0 629.0 172.0 627.0 173.0 628.0 174.0 628.0 175.0 628.0 176.0 629.0 177.0 629.0 178.0 631.0 179.0 631.0 180.0 630.0 181.0 629.0 182.0 628.0 183.0 628.0 184.0 628.0 185.0 627.0 186.0 627.0 187.0 626.0 188.0 624.0 189.0 625.0 190.0 625.0 191.0 625.0 192.0 626.0 193.0 626.0 194.0 625.0 195.0 628.0 196.0 627.0 197.0 626.0 198.0 627.0 199.0 626.0 200.0 626.0 201.0 626.0 202.0 627.0 203.0 625.0 204.0 628.0 205.0 625.0 206.0 626.0 207.0 625.0 208.0 625.0 209.0 625.0 210.0 626.0 211.0 625.0 212.0 625.0 213.0 623.0 214.0 623.0 215.0 622.0 216.0 621.0 217.0 622.0 218.0 621.0 219.0 620.0 220.0 619.0 221.0 620.0 222.0 617.0 223.0 618.0 224.0 617.0 225.0 619.0 226.0 618.0 227.0 619.0 228.0 620.0 229.0 619.0 230.0 618.0 231.0 618.0 232.0 619.0 233.0 621.0 234.0 619.0 235.0 620.0 236.0 619.0 237.0 620.0 238.0 620.0 239.0 620.0 240.0 620.0 241.0 622.0 242.0 620.0 243.0 619.0 244.0 617.0 245.0 615.0 246.0 615.0 247.0 616.0 248.0 616.0 249.0 619.0 250.0 617.0 251.0 619.0 252.0 618.0 253.0 618.0 254.0 620.0 255.0 621.0 256.0 622.0 257.0 622.0 258.0 619.0 259.0 617.0 260.0 618.0 261.0 614.0 262.0 615.0 263.0 615.0 264.0 617.0 265.0 619.0 266.0 622.0 267.0 620.0 268.0 618.0 269.0 619.0 270.0 615.0 271.0 615.0 272.0 614.0 273.0 615.0 274.0 618.0 275.0 619.0 276.0 623.0 277.0 620.0 278.0 621.0 279.0 620.0 280.0 618.0 281.0 620.0 282.0 616.0 283.0 616.0 284.0 617.0 285.0 616.0 286.0 617.0 287.0 617.0 288.0 615.0 289.0 613.0 290.0 611.0 291.0 610.0 292.0 609.0 293.0 610.0 294.0 611.0 295.0 611.0 296.0 612.0 297.0 612.0 298.0 613.0 299.0 614.0 300.0 613.0 301.0 614.0 302.0 614.0 303.0 615.0 304.0 615.0 305.0 615.0 306.0 617.0 307.0 616.0 308.0 616.0 309.0 616.0 310.0 615.0 311.0 614.0 312.0 612.0 313.0 610.0 314.0 609.0 315.0 609.0 316.0 609.0 317.0 608.0 318.0 608.0 319.0 609.0 320.0 610.0 321.0 610.0 322.0 610.0 323.0 610.0 324.0 611.0 325.0 611.0 326.0 613.0 327.0 612.0 328.0 612.0 329.0 614.0 330.0 612.0 331.0 610.0 332.0 609.0 333.0 608.0 334.0 606.0 335.0 605.0 336.0 604.0 337.0 606.0 338.0 605.0 339.0 606.0 340.0 606.0 341.0 608.0 342.0 607.0 343.0 609.0 344.0 610.0 345.0 610.0 346.0 609.0 347.0 612.0 348.0 611.0 349.0 609.0 350.0 608.0 351.0 609.0 352.0 607.0 353.0 606.0 354.0 608.0 355.0 608.0 356.0 610.0 357.0 609.0 358.0 610.0 359.0 609.0 360.0 611.0 361.0 610.0 362.0 612.0 363.0 611.0 364.0 610.0 365.0 607.0 366.0 609.0 367.0 610.0 368.0 608.0 369.0 606.0 370.0 606.0 371.0 606.0 372.0 604.0 373.0 602.0 374.0 599.0 375.0 597.0 376.0 599.0 377.0 598.0 378.0 599.0 379.0 600.0 380.0 600.0 381.0 596.0 382.0 593.0 383.0 588.0 384.0 587.0 385.0 588.0 386.0 590.0 387.0 593.0 388.0 595.0 389.0 600.0 390.0 594.0 391.0 590.0 392.0 587.0 393.0 585.0 394.0 586.0 395.0 586.0 396.0 582.0 397.0 578.0 398.0 575.0 399.0 572.0 400.0 576.0 401.0 573.0 402.0 574.0 403.0 573.0 404.0 570.0 405.0 565.0 406.0 565.0 407.0 567.0 408.0 568.0 409.0 571.0 410.0 571.0 411.0 572.0 412.0 571.0 413.0 571.0 414.0 569.0 415.0 568.0 416.0 569.0 417.0 570.0 418.0 570.0 419.0 569.0 420.0 573.0 421.0 575.0 422.0 578.0 423.0 579.0 424.0 581.0 425.0 586.0 426.0 590.0 427.0 594.0 428.0 594.0 429.0 591.0 430.0 593.0 431.0 592.0 432.0 591.0 433.0 592.0 434.0 592.0 435.0 594.0 436.0 596.0 437.0 584.0 438.0 578.0 439.0 578.0 440.0 580.0 441.0 580.0 442.0 583.0 443.0 584.0 444.0 587.0 445.0 594.0 446.0 599.0 447.0 598.0 448.0 596.0 449.0 591.0 450.0 598.0 451.0 604.0 452.0 603.0 453.0 599.0 454.0 603.0 455.0 607.0 456.0 610.0 457.0 613.0 458.0 616.0 459.0 619.0 460.0 623.0 461.0 620.0 462.0 617.0 463.0 615.0 464.0 618.0 465.0 622.0 466.0 627.0 467.0 624.0 468.0 624.0 469.0 623.0 470.0 624.0 471.0 624.0 472.0 625.0 473.0 627.0 474.0 626.0 475.0 622.0 476.0 619.0 477.0 613.0 478.0 614.0 479.0 614.0 480.0 613.0 481.0 611.0 482.0 612.0 483.0 611.0 484.0 613.0 485.0 615.0 486.0 615.0 487.0 617.0 488.0 616.0 489.0 615.0 490.0 617.0 491.0 616.0 492.0 616.0 493.0 617.0 494.0 617.0 495.0 614.0 496.0 617.0 497.0 616.0 498.0 617.0 499.0 615.0 500.0 614.0 501.0 613.0 502.0 617.0 503.0 620.0 504.0 624.0 505.0 619.0 506.0 617.0 507.0 612.0 508.0 608.0 509.0 610.0 510.0 611.0 511.0 614.0 512.0 610.0 513.0 606.0 514.0 604.0 515.0 608.0 516.0 609.0 517.0 613.0 518.0 613.0 519.0 611.0 520.0 614.0 521.0 611.0 522.0 611.0 523.0 607.0 524.0 611.0 525.0 614.0 526.0 613.0 527.0 612.0 528.0 611.0 529.0 610.0 530.0 607.0 531.0 605.0 532.0 606.0 533.0 602.0 534.0 602.0 535.0 604.0 536.0 604.0 537.0 605.0 538.0 604.0 539.0 601.0 540.0 599.0 541.0 603.0 542.0 604.0 543.0 607.0 544.0 604.0 545.0 603.0 546.0 601.0 547.0 597.0 548.0 596.0 549.0 595.0 550.0 596.0 551.0 595.0 552.0 598.0 553.0 597.0 554.0 597.0 555.0 597.0 556.0 599.0 557.0 600.0 558.0 598.0 559.0 596.0 560.0 595.0 561.0 594.0 562.0 595.0 563.0 597.0 564.0 596.0 565.0 597.0 566.0 596.0 567.0 594.0 568.0 596.0 569.0 597.0 570.0 597.0 571.0 601.0 572.0 602.0 573.0 602.0 574.0 601.0 575.0 604.0 576.0 604.0 577.0 606.0 578.0 603.0 579.0 603.0 580.0 603.0 581.0 601.0 582.0 601.0 583.0 600.0 584.0 602.0 585.0 604.0 586.0 606.0 587.0 607.0 588.0 609.0 589.0 608.0 590.0 608.0 591.0 608.0 592.0 610.0 593.0 612.0 594.0 614.0 595.0 610.0 596.0 607.0 597.0 603.0 598.0 599.0 599.0 594.0 600.0 598.0 601.0 603.0 602.0 608.0 603.0 604.0 604.0 603.0 605.0 600.0 606.0 599.0 607.0 599.0 608.0 599.0 609.0 598.0 610.0 598.0 611.0 598.0 612.0 596.0 613.0 595.0 614.0 594.0 615.0 592.0 616.0 592.0 617.0 589.0 618.0 588.0 619.0 586.0 620.0 587.0 621.0 590.0 622.0 591.0 623.0 593.0 624.0 590.0 625.0 592.0 626.0 590.0 627.0 589.0 628.0 588.0 629.0 588.0 630.0 586.0 631.0 587.0 632.0 588.0 633.0 589.0 634.0 591.0 635.0 590.0 636.0 591.0 637.0 591.0 638.0 590.0 639.0 602.0 640.0 602.0 641.0 601.0 642.0 602.0 643.0 604.0 644.0 604.0 645.0 602.0 646.0 602.0 647.0 603.0 648.0 599.0 649.0 599.0 650.0 600.0 651.0 601.0 652.0 602.0 653.0 604.0 654.0 605.0 655.0 607.0 656.0 606.0 657.0 608.0 658.0 607.0 659.0 607.0 660.0 606.0 661.0 605.0 662.0 604.0 663.0 603.0 664.0 605.0 665.0 608.0 666.0 608.0 667.0 605.0 668.0 602.0 669.0 601.0 670.0 599.0 671.0 599.0 672.0 598.0 673.0 599.0 674.0 599.0 675.0 598.0 676.0 598.0 677.0 597.0 678.0 596.0 679.0 597.0 680.0 599.0 681.0 600.0 682.0 601.0 683.0 601.0 684.0 599.0 685.0 597.0 686.0 597.0 687.0 595.0 688.0 590.0 689.0 590.0 690.0 591.0 691.0 595.0 692.0 597.0 693.0 597.0 694.0 600.0 695.0 600.0 696.0 602.0 697.0 602.0 698.0 602.0 699.0 603.0 700.0 603.0 701.0 603.0 702.0 599.0 703.0 596.0 704.0 592.0 705.0 590.0 706.0 587.0 707.0 586.0 708.0 583.0 709.0 583.0 710.0 583.0 711.0 581.0 712.0 580.0 713.0 580.0 714.0 579.0 715.0 579.0 716.0 578.0 717.0 579.0 718.0 579.0 719.0 581.0 720.0 582.0 721.0 587.0 722.0 592.0 723.0 595.0 724.0 595.0 725.0 595.0 726.0 595.0 727.0 589.0 728.0 584.0 729.0 585.0 730.0 585.0 731.0 583.0 732.0 582.0 733.0 582.0 734.0 581.0 735.0 580.0 736.0 579.0 737.0 577.0 738.0 576.0 739.0 577.0 740.0 581.0 741.0 582.0 742.0 586.0 743.0 587.0 744.0 588.0 745.0 589.0 746.0 589.0 747.0 590.0 748.0 592.0 749.0 595.0 750.0 602.0 751.0 602.0 752.0 605.0 753.0 611.0 754.0 615.0 755.0 612.0 756.0 613.0 757.0 609.0 758.0 616.0 759.0 619.0 760.0 619.0 761.0 619.0 762.0 618.0 763.0 621.0 764.0 628.0 765.0 630.0 766.0 632.0 767.0 626.0 768.0 620.0 769.0 613.0 770.0 613.0 771.0 615.0 772.0 617.0 773.0 619.0 774.0 620.0 775.0 617.0 776.0 613.0 777.0 610.0 778.0 608.0 779.0 605.0 780.0 605.0 781.0 601.0 782.0 605.0 783.0 606.0 784.0 606.0 785.0 604.0 786.0 605.0 787.0 607.0 788.0 604.0 789.0 608.0 790.0 615.0 791.0 618.0 792.0 617.0 793.0 614.0 794.0 616.0 795.0 618.0 796.0 621.0 797.0 623.0 798.0 622.0 799.0 620.0 800.0 622.0 801.0 624.0 802.0 627.0 803.0 630.0 804.0 632.0 805.0 631.0 806.0 633.0 807.0 633.0 808.0 635.0 809.0 631.0 810.0 626.0 811.0 619.0 812.0 619.0 813.0 617.0 814.0 616.0 815.0 615.0 816.0 614.0 817.0 609.0 818.0 601.0 819.0 596.0 820.0 587.0 821.0 586.0 822.0 586.0 823.0 585.0 824.0 579.0 825.0 573.0 826.0 566.0 827.0 567.0 828.0 568.0 829.0 573.0 830.0 579.0 831.0 588.0 832.0 596.0 833.0 600.0 834.0 605.0 835.0 601.0 836.0 599.0 837.0 604.0 838.0 608.0 839.0 612.0 840.0 614.0 841.0 619.0 842.0 620.0 843.0 619.0 844.0 616.0 845.0 614.0 846.0 611.0 847.0 614.0 848.0 618.0 849.0 622.0 850.0 617.0 851.0 613.0 852.0 605.0 853.0 601.0 854.0 599.0 855.0 598.0 856.0 598.0 857.0 596.0 858.0 595.0 859.0 590.0 860.0 589.0 861.0 586.0 862.0 584.0 863.0 583.0 864.0 582.0 865.0 585.0 866.0 587.0 867.0 590.0 868.0 591.0 869.0 590.0 870.0 593.0 871.0 594.0 872.0 590.0 873.0 587.0 874.0 580.0 875.0 576.0 876.0 574.0 877.0 573.0 878.0 572.0 879.0 571.0 880.0 570.0 881.0 568.0 882.0 569.0 883.0 566.0 884.0 563.0 885.0 561.0 886.0 554.0 887.0 564.0 888.0 569.0 889.0 578.0 890.0 576.0 891.0 575.0 892.0 573.0 893.0 574.0 894.0 578.0 895.0 578.0 896.0 580.0 897.0 579.0 898.0 580.0 899.0 577.0 900.0 579.0 901.0 576.0 902.0 574.0 903.0 570.0 904.0 568.0 905.0 566.0 906.0 565.0 907.0 563.0 908.0 562.0 909.0 561.0 910.0 559.0 911.0 558.0 912.0 555.0 913.0 568.0 914.0 561.0 915.0 555.0 916.0 548.0 917.0 547.0 918.0 547.0 919.0 547.0 920.0 547.0 921.0 545.0 922.0 545.0 923.0 545.0 924.0 547.0 925.0 546.0 926.0 546.0 927.0 546.0 928.0 546.0 929.0 547.0 930.0 546.0 931.0 549.0 932.0 549.0 933.0 548.0 934.0 549.0 935.0 547.0 936.0 550.0 937.0 548.0 938.0 549.0 939.0 548.0 940.0 545.0 941.0 546.0 942.0 546.0 943.0 548.0 944.0 549.0 945.0 549.0 946.0 550.0 947.0 553.0 948.0 552.0 949.0 556.0 950.0 557.0 951.0 558.0 952.0 562.0 953.0 560.0 954.0 560.0 955.0 561.0 956.0 560.0 957.0 562.0 958.0 563.0 959.0 566.0 960.0 568.0 961.0 565.0 962.0 561.0 963.0 560.0 964.0 559.0 965.0 561.0 966.0 562.0 967.0 561.0 968.0 561.0 969.0 562.0 970.0 565.0 971.0 566.0 972.0 561.0 973.0 561.0 974.0 560.0 975.0 556.0 976.0 555.0 977.0 556.0 978.0 556.0 979.0 559.0 980.0 557.0 981.0 554.0 982.0 553.0 983.0 550.0 984.0 547.0 985.0 543.0 986.0 541.0 987.0 536.0 988.0 539.0 989.0 540.0 990.0 542.0 991.0 544.0 992.0 544.0 993.0 543.0 994.0 543.0 995.0 545.0 996.0 546.0 997.0 549.0 998.0 551.0 999.0 551.0 1000.0 550.0 1001.0 550.0 1002.0 550.0 1003.0 550.0 1004.0 553.0 1005.0 550.0 1006.0 551.0 1007.0 551.0 1008.0 551.0 1009.0 550.0 1010.0 549.0 1011.0 548.0 1012.0 547.0 1013.0 544.0 1014.0 543.0 1015.0 543.0 1016.0 541.0 1017.0 540.0 1018.0 540.0 1019.0 537.0 1020.0 538.0 1021.0 539.0 1022.0 537.0 1023.0 537.0 1024.0 540.0 1025.0 539.0 1026.0 534.0 1027.0 534.0 1028.0 534.0 1029.0 535.0 1030.0 535.0 1031.0 534.0 1032.0 531.0 1033.0 528.0 1034.0 531.0 1035.0 535.0 1036.0 540.0 1037.0 537.0 1038.0 537.0 1039.0 535.0 1040.0 533.0 1041.0 533.0 1042.0 535.0 1043.0 537.0 1044.0 539.0 1045.0 538.0 1046.0 539.0 1047.0 537.0 1048.0 537.0 1049.0 536.0 1050.0 536.0 1051.0 538.0 1052.0 538.0 1053.0 539.0 1054.0 539.0 1055.0 542.0 1056.0 541.0 1057.0 540.0 1058.0 540.0 1059.0 540.0 1060.0 539.0 1061.0 540.0 1062.0 538.0 1063.0 539.0 1064.0 540.0 1065.0 539.0 1066.0 541.0 1067.0 541.0 1068.0 542.0 1069.0 542.0 1070.0 542.0 1071.0 540.0 1072.0 539.0 1073.0 538.0 1074.0 539.0 1075.0 537.0 1076.0 537.0 1077.0 539.0 1078.0 540.0 1079.0 540.0 1080.0 541.0 1081.0 542.0 1082.0 542.0 1083.0 543.0 1084.0 546.0 1085.0 548.0 1086.0 546.0 1087.0 546.0 1088.0 547.0 1089.0 546.0 1090.0 546.0 1091.0 544.0 1092.0 547.0 1093.0 553.0 1094.0 556.0 1095.0 556.0 1096.0 554.0 1097.0 554.0 1098.0 554.0 1099.0 556.0 1100.0 557.0 1101.0 555.0 1102.0 555.0 1103.0 554.0 1104.0 554.0 1105.0 555.0 1106.0 555.0 1107.0 556.0 1108.0 556.0 1109.0 553.0 1110.0 552.0 1111.0 551.0 1112.0 551.0 1113.0 549.0 1114.0 548.0 1115.0 547.0 1116.0 548.0 1117.0 548.0 1118.0 547.0 1119.0 547.0 1120.0 548.0 1121.0 550.0 1122.0 548.0 1123.0 549.0 1124.0 550.0 1125.0 550.0 1126.0 549.0 1127.0 550.0 1128.0 552.0 1129.0 549.0 1130.0 553.0 1131.0 552.0 1132.0 552.0 1133.0 554.0 1134.0 552.0 1135.0 550.0 1136.0 550.0 1137.0 548.0 1138.0 548.0 1139.0 548.0 1140.0 548.0 1141.0 546.0 1142.0 545.0 1143.0 545.0 1144.0 543.0 1145.0 543.0 1146.0 542.0 1147.0 541.0 1148.0 540.0 1149.0 539.0 1150.0 537.0 1151.0 538.0 1152.0 538.0 1153.0 539.0 1154.0 538.0 1155.0 539.0 1156.0 541.0 1157.0 541.0 1158.0 540.0 1159.0 542.0 1160.0 540.0 1161.0 541.0 1162.0 540.0 1163.0 539.0 1164.0 538.0 1165.0 537.0 1166.0 533.0 1167.0 532.0 1168.0 533.0 1169.0 532.0 1170.0 532.0 1171.0 532.0 1172.0 533.0 1173.0 536.0 1174.0 537.0 1175.0 536.0 1176.0 536.0 1177.0 535.0 1178.0 537.0 1179.0 539.0 1180.0 539.0 1181.0 538.0 1182.0 540.0 1183.0 540.0 1184.0 540.0 1185.0 542.0 1186.0 541.0 1187.0 541.0 1188.0 541.0 1189.0 541.0 1190.0 540.0 1191.0 541.0 1192.0 539.0 1193.0 539.0 1194.0 539.0 1195.0 538.0 1196.0 536.0 1197.0 538.0 1198.0 535.0 1199.0 535.0 1200.0 535.0 1201.0 533.0 1202.0 536.0 1203.0 538.0 1204.0 537.0 1205.0 542.0 1206.0 546.0 1207.0 547.0 1208.0 547.0 1209.0 551.0 1210.0 553.0 1211.0 556.0 1212.0 558.0 1213.0 558.0 1214.0 553.0 1215.0 551.0 1216.0 552.0 1217.0 552.0 1218.0 553.0 1219.0 551.0 1220.0 550.0 1221.0 549.0 1222.0 548.0 1223.0 547.0 1224.0 546.0 1225.0 546.0 1226.0 545.0 1227.0 543.0 1228.0 550.0 1229.0 556.0 1230.0 557.0 1231.0 555.0" fill="none" stroke="#ff0000" stroke-width="2.1" stroke-linejoin="miter"/>
<text class="la" transform="translate(0 251.7) scale(0.78 1)" x="42.2 50.1 58.0" y="0" fill="#d2d2d2">088</text><text class="la" transform="translate(0 251.7) scale(0.78 1)" x="89.6 97.5" y="0" fill="#d2d2d2">09</text><text class="la" transform="translate(0 251.7) scale(0.78 1)" x="169.1 177.0" y="0" fill="#d2d2d2">10</text><text class="la" transform="translate(0 251.7) scale(0.78 1)" x="247.3 255.2" y="0" fill="#d2d2d2">11</text><text class="la" transform="translate(0 251.7) scale(0.78 1)" x="326.8 334.7" y="0" fill="#d2d2d2">12</text><text class="la" transform="translate(0 251.7) scale(0.78 1)" x="405.0 412.9" y="0" fill="#d2d2d2">13</text><text class="la" transform="translate(0 251.7) scale(0.78 1)" x="483.2 491.1" y="0" fill="#d2d2d2">14</text><text class="la" transform="translate(0 251.7) scale(0.78 1)" x="541.5 549.5" y="0" fill="#d2d2d2">15</text><text class="la" transform="translate(0 251.7) scale(0.78 1)" x="578.1 586.0" y="0" fill="#d2d2d2">16</text><text class="la" transform="translate(0 251.7) scale(0.78 1)" x="617.8 625.7" y="0" fill="#d2d2d2">17</text><text class="la" transform="translate(0 251.7) scale(0.78 1)" x="696.0 704.0" y="0" fill="#d2d2d2">18</text><text class="la" transform="translate(0 251.7) scale(0.78 1)" x="775.5 783.4" y="0" fill="#d2d2d2">19</text><text class="la" transform="translate(0 251.7) scale(0.78 1)" x="853.7 861.6" y="0" fill="#d2d2d2">20</text><text class="la" transform="translate(0 251.7) scale(0.78 1)" x="931.9 939.8" y="0" fill="#d2d2d2">21</text><text class="la" transform="translate(0 251.7) scale(0.78 1)" x="1011.4 1019.3" y="0" fill="#d2d2d2">22</text><text class="la" transform="translate(0 251.7) scale(0.78 1)" x="1089.6 1097.5" y="0" fill="#d2d2d2">23</text><text class="la" transform="translate(0 251.7) scale(0.78 1)" x="1169.1 1177.0" y="0" fill="#d2d2d2">00</text><text class="la" transform="translate(0 251.7) scale(0.78 1)" x="1247.3 1255.2" y="0" fill="#d2d2d2">01</text><text class="la" transform="translate(0 251.7) scale(0.78 1)" x="1325.5 1333.4" y="0" fill="#d2d2d2">02</text><text class="la" transform="translate(0 251.7) scale(0.78 1)" x="1405.0 1412.9" y="0" fill="#d2d2d2">03</text><text class="la" transform="translate(0 251.7) scale(0.78 1)" x="1479.4 1487.3" y="0" fill="#d2d2d2">04</text><text class="la" transform="translate(0 251.7) scale(0.78 1)" x="1546.0 1554.0" y="0" fill="#d2d2d2">05</text><text class="la" transform="translate(0 237.3) scale(0.78 1)" x="1169.1 1177.0" y="0" fill="#d2d2d2">19</text><g clip-path="url(#k1)"><text class="la" transform="translate(0 83.0) scale(0.78 1)" x="1586.7 1596.3 1602.5 1610.4 1618.4" y="0" fill="#d2d2d2">6,350</text></g><g clip-path="url(#k1)"><text class="la" transform="translate(0 116.9) scale(0.78 1)" x="1586.7 1596.3 1602.5 1610.4 1618.4" y="0" fill="#d2d2d2">6,325</text></g><g clip-path="url(#k1)"><text class="la" transform="translate(0 151.7) scale(0.78 1)" x="1586.7 1596.3 1602.5 1610.4 1618.4" y="0" fill="#d2d2d2">6,300</text></g><g clip-path="url(#k1)"><text class="la" transform="translate(0 185.8) scale(0.78 1)" x="1586.7 1596.3 1602.5 1610.4 1618.4" y="0" fill="#d2d2d2">6,275</text></g><g clip-path="url(#k1)"><text class="la" transform="translate(0 254.3) scale(0.78 1)" x="1586.7 1596.3 1602.5 1610.4 1618.4" y="0" fill="#d2d2d2">6,225</text></g><text class="lb" transform="translate(0 221.8) scale(0.88 1)" x="1420.5 1429.3 1434.6 1441.6 1448.6" y="0" fill="#000">6,253</text><text class="la" transform="translate(0 509.7) scale(0.78 1)" x="42.2 50.1 58.0" y="0" fill="#d2d2d2">088</text><text class="la" transform="translate(0 509.7) scale(0.78 1)" x="89.6 97.5" y="0" fill="#d2d2d2">09</text><text class="la" transform="translate(0 509.7) scale(0.78 1)" x="169.1 177.0" y="0" fill="#d2d2d2">10</text><text class="la" transform="translate(0 509.7) scale(0.78 1)" x="247.3 255.2" y="0" fill="#d2d2d2">11</text><text class="la" transform="translate(0 509.7) scale(0.78 1)" x="326.8 334.7" y="0" fill="#d2d2d2">12</text><text class="la" transform="translate(0 509.7) scale(0.78 1)" x="405.0 412.9" y="0" fill="#d2d2d2">13</text><text class="la" transform="translate(0 509.7) scale(0.78 1)" x="483.2 491.1" y="0" fill="#d2d2d2">14</text><text class="la" transform="translate(0 509.7) scale(0.78 1)" x="541.5 549.5" y="0" fill="#d2d2d2">15</text><text class="la" transform="translate(0 509.7) scale(0.78 1)" x="578.1 586.0" y="0" fill="#d2d2d2">16</text><text class="la" transform="translate(0 509.7) scale(0.78 1)" x="617.8 625.7" y="0" fill="#d2d2d2">17</text><text class="la" transform="translate(0 509.7) scale(0.78 1)" x="696.0 704.0" y="0" fill="#d2d2d2">18</text><text class="la" transform="translate(0 509.7) scale(0.78 1)" x="775.5 783.4" y="0" fill="#d2d2d2">19</text><text class="la" transform="translate(0 509.7) scale(0.78 1)" x="853.7 861.6" y="0" fill="#d2d2d2">20</text><text class="la" transform="translate(0 509.7) scale(0.78 1)" x="931.9 939.8" y="0" fill="#d2d2d2">21</text><text class="la" transform="translate(0 509.7) scale(0.78 1)" x="1011.4 1019.3" y="0" fill="#d2d2d2">22</text><text class="la" transform="translate(0 509.7) scale(0.78 1)" x="1089.6 1097.5" y="0" fill="#d2d2d2">23</text><text class="la" transform="translate(0 509.7) scale(0.78 1)" x="1169.1 1177.0" y="0" fill="#d2d2d2">00</text><text class="la" transform="translate(0 509.7) scale(0.78 1)" x="1247.3 1255.2" y="0" fill="#d2d2d2">01</text><text class="la" transform="translate(0 509.7) scale(0.78 1)" x="1325.5 1333.4" y="0" fill="#d2d2d2">02</text><text class="la" transform="translate(0 509.7) scale(0.78 1)" x="1405.0 1412.9" y="0" fill="#d2d2d2">03</text><text class="la" transform="translate(0 509.7) scale(0.78 1)" x="1479.4 1487.3" y="0" fill="#d2d2d2">04</text><text class="la" transform="translate(0 509.7) scale(0.78 1)" x="1546.0 1554.0" y="0" fill="#d2d2d2">05</text><text class="la" transform="translate(0 495.3) scale(0.78 1)" x="1169.1 1177.0" y="0" fill="#d2d2d2">19</text><g clip-path="url(#k2)"><text class="la" transform="translate(0 270.9) scale(0.78 1)" x="1586.7 1596.3 1602.5 1610.4 1618.4" y="0" fill="#d2d2d2">3,850</text></g><g clip-path="url(#k2)"><text class="la" transform="translate(0 334.1) scale(0.78 1)" x="1586.7 1596.3 1602.5 1610.4 1618.4" y="0" fill="#d2d2d2">3,800</text></g><g clip-path="url(#k2)"><text class="la" transform="translate(0 396.9) scale(0.78 1)" x="1586.7 1596.3 1602.5 1610.4 1618.4" y="0" fill="#d2d2d2">3,750</text></g><g clip-path="url(#k2)"><text class="la" transform="translate(0 522.8) scale(0.78 1)" x="1586.7 1596.3 1602.5 1610.4 1618.4" y="0" fill="#d2d2d2">3,650</text></g><text class="lb" transform="translate(0 463.9) scale(0.88 1)" x="1420.5 1429.3 1434.6 1441.6 1448.6" y="0" fill="#000">3,701</text><text class="la" transform="translate(0 683.7) scale(0.78 1)" x="42.2 50.1 58.0" y="0" fill="#d2d2d2">088</text><text class="la" transform="translate(0 683.7) scale(0.78 1)" x="89.6 97.5" y="0" fill="#d2d2d2">09</text><text class="la" transform="translate(0 683.7) scale(0.78 1)" x="169.1 177.0" y="0" fill="#d2d2d2">10</text><text class="la" transform="translate(0 683.7) scale(0.78 1)" x="247.3 255.2" y="0" fill="#d2d2d2">11</text><text class="la" transform="translate(0 683.7) scale(0.78 1)" x="326.8 334.7" y="0" fill="#d2d2d2">12</text><text class="la" transform="translate(0 683.7) scale(0.78 1)" x="405.0 412.9" y="0" fill="#d2d2d2">13</text><text class="la" transform="translate(0 683.7) scale(0.78 1)" x="483.2 491.1" y="0" fill="#d2d2d2">14</text><text class="la" transform="translate(0 683.7) scale(0.78 1)" x="541.5 549.5" y="0" fill="#d2d2d2">15</text><text class="la" transform="translate(0 683.7) scale(0.78 1)" x="578.1 586.0" y="0" fill="#d2d2d2">16</text><text class="la" transform="translate(0 683.7) scale(0.78 1)" x="617.8 625.7" y="0" fill="#d2d2d2">17</text><text class="la" transform="translate(0 683.7) scale(0.78 1)" x="696.0 704.0" y="0" fill="#d2d2d2">18</text><text class="la" transform="translate(0 683.7) scale(0.78 1)" x="775.5 783.4" y="0" fill="#d2d2d2">19</text><text class="la" transform="translate(0 683.7) scale(0.78 1)" x="853.7 861.6" y="0" fill="#d2d2d2">20</text><text class="la" transform="translate(0 683.7) scale(0.78 1)" x="931.9 939.8" y="0" fill="#d2d2d2">21</text><text class="la" transform="translate(0 683.7) scale(0.78 1)" x="1011.4 1019.3" y="0" fill="#d2d2d2">22</text><text class="la" transform="translate(0 683.7) scale(0.78 1)" x="1089.6 1097.5" y="0" fill="#d2d2d2">23</text><text class="la" transform="translate(0 683.7) scale(0.78 1)" x="1169.1 1177.0" y="0" fill="#d2d2d2">00</text><text class="la" transform="translate(0 683.7) scale(0.78 1)" x="1247.3 1255.2" y="0" fill="#d2d2d2">01</text><text class="la" transform="translate(0 683.7) scale(0.78 1)" x="1325.5 1333.4" y="0" fill="#d2d2d2">02</text><text class="la" transform="translate(0 683.7) scale(0.78 1)" x="1405.0 1412.9" y="0" fill="#d2d2d2">03</text><text class="la" transform="translate(0 683.7) scale(0.78 1)" x="1479.4 1487.3" y="0" fill="#d2d2d2">04</text><text class="la" transform="translate(0 683.7) scale(0.78 1)" x="1546.0 1554.0" y="0" fill="#d2d2d2">05</text><text class="la" transform="translate(0 669.3) scale(0.78 1)" x="1169.1 1177.0" y="0" fill="#d2d2d2">19</text><g clip-path="url(#k3)"><text class="la" transform="translate(0 618.8) scale(0.78 1)" x="1586.7 1596.3 1602.5 1610.4 1618.4" y="0" fill="#d2d2d2">2,500</text></g><g clip-path="url(#k3)"><text class="la" transform="translate(0 681.8) scale(0.78 1)" x="1586.7 1596.3 1602.5 1610.4 1618.4" y="0" fill="#d2d2d2">2,450</text></g><text class="lb" transform="translate(0 559.9) scale(0.88 1)" x="1420.5 1429.3 1434.6 1441.6 1448.6" y="0" fill="#000">2,552</text>
</svg>
</body></html>
